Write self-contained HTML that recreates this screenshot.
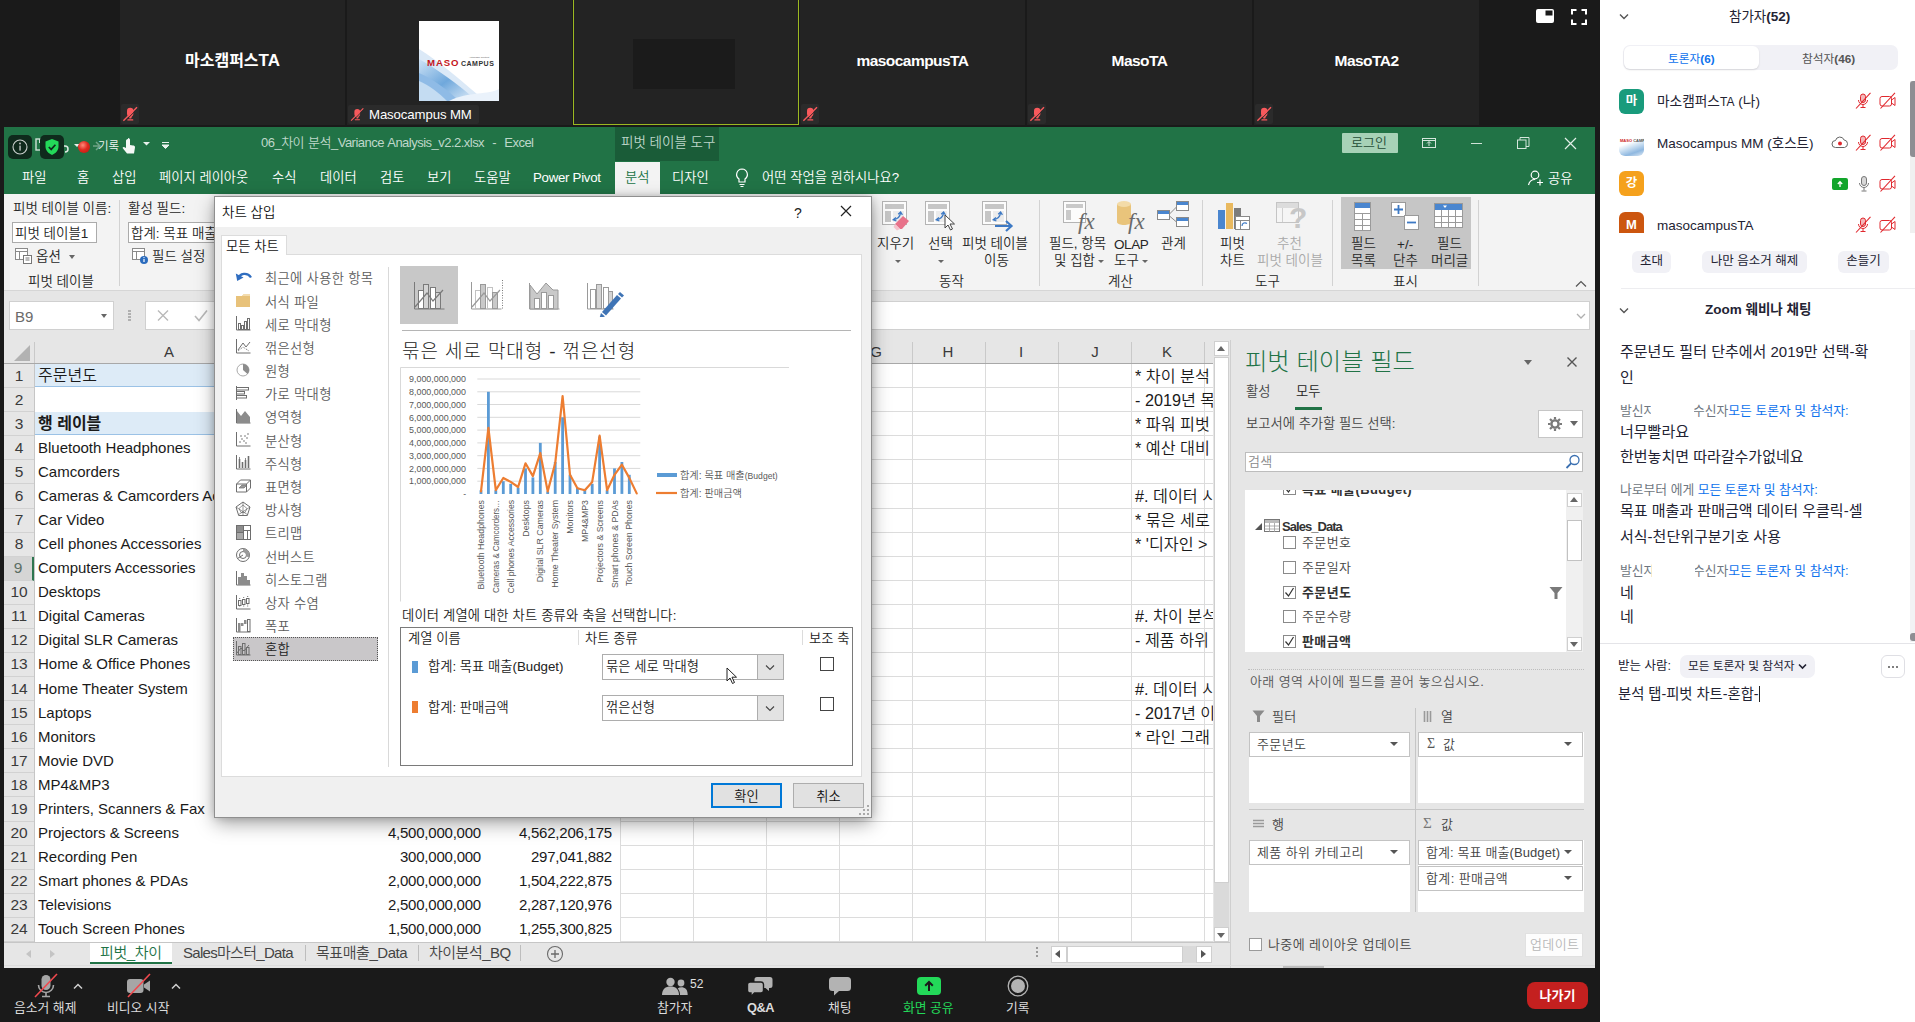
<!DOCTYPE html>
<html lang="ko">
<head>
<meta charset="utf-8">
<title>Zoom Webinar - Excel</title>
<style>
*{box-sizing:border-box;margin:0;padding:0}
html,body{width:1915px;height:1022px;overflow:hidden;background:#1a1a1a}
body{font-family:"Liberation Sans","Noto Sans CJK KR",sans-serif;font-size:13px;color:#222;position:relative}
.a{position:absolute}
.t{position:absolute;white-space:nowrap;line-height:1}
.kr{font-family:"Noto Sans CJK KR","Liberation Sans",sans-serif}
/* video strip */
.tile{position:absolute;top:0;height:125px;background:#232323}
.tile .nm{position:absolute;left:0;right:0;top:51.5px;text-align:center;color:#fff;font-weight:bold;font-size:16px;line-height:18px;white-space:nowrap}
.mut{position:absolute;left:.5px;top:104px;width:18px;height:20px;background:#2b2b2b;border-radius:2px}
/* excel */
#xl{font-weight:350;position:absolute;left:4px;top:127px;width:1591px;height:841px;background:#e6e6e6;overflow:hidden}
.g{color:#fff}
.rt{margin-top:1px;position:absolute;white-space:nowrap;line-height:1;font-size:13.5px;color:#262626}
.cell{position:absolute;white-space:nowrap;line-height:24px;font-size:15px;color:#1a1a1a;height:24px}
.rn{position:absolute;left:0;width:29px;text-align:center;font-size:15.5px;line-height:24px;color:#333;height:24px}
.num{position:absolute;text-align:right;white-space:nowrap;line-height:24px;font-size:15px;letter-spacing:-.22px;color:#1a1a1a;height:24px}
</style>
</head>
<body>
<!-- ===== TOP VIDEO STRIP ===== -->
<div id="strip" class="a" style="left:0;top:0;width:1600px;height:127px;background:#1a1a1a">
  <div class="tile" style="left:120px;width:225px"><div class="nm">마소캠퍼스<span style="font-size:17px">TA</span></div><div class="mut"><svg width="19" height="20" viewBox="0 0 19 20"><use href="#tmic"/></svg></div></div>
  <div class="tile" style="left:347px;width:225px">
    <div class="a" style="left:72px;top:21px;width:80px;height:80px;background:#fff;overflow:hidden">
      <svg width="80" height="80" viewBox="0 0 80 80"><defs><linearGradient id="lg1" x1="0" y1="0" x2="1" y2="1"><stop offset="0" stop-color="#cfe3f6"/><stop offset=".5" stop-color="#6fa8dc"/><stop offset="1" stop-color="#e8f1fa"/></linearGradient></defs>
      <path d="M0 28 C20 40 45 62 66 80 H0z" fill="#dbe9f7"/><path d="M0 38 C18 48 40 64 58 80 H0z" fill="url(#lg1)"/><path d="M0 52 C14 58 30 70 40 80 H0z" fill="#8fbbe6"/><path d="M0 60 C10 64 20 72 28 80 H0z" fill="#c4dcf2"/><path d="M30 80 C50 70 70 74 80 68 V80z" fill="#eaf2fb"/>
      <text x="8" y="45" font-family="Liberation Sans, sans-serif" font-weight="bold" font-size="9.600" fill="#c4161c" letter-spacing=".9">MASO</text>
      <text x="42" y="45" font-family="Liberation Sans, sans-serif" font-weight="bold" font-size="7" fill="#333" letter-spacing=".5">CAMPUS</text>
      <text x="50" y="37" font-family="Liberation Sans, sans-serif" font-size="2.400" fill="#555">Actionable Content</text></svg>
    </div>
    <div class="a" style="left:1px;top:105px;width:131px;height:19px;background:#2b2b2b;border-radius:2px"></div>
    <svg class="a" style="left:2px;top:105px" width="17" height="19" viewBox="0 0 19 20"><use href="#tmic"/></svg>
    <div class="t" style="left:22px;top:108px;font-size:13.200px;color:#fff;letter-spacing:-.1px">Masocampus MM</div>
  </div>
  <div class="tile" style="left:573px;width:226px;border:1px solid #9bb821;border-top:0"><div class="a" style="left:59px;top:39px;width:102px;height:50px;background:#1b1b1b"></div></div>
  <div class="tile" style="left:800px;width:225px"><div class="nm" style="font-size:15.500px;letter-spacing:-.55px">masocampusTA</div><div class="mut"><svg width="19" height="20" viewBox="0 0 19 20"><use href="#tmic"/></svg></div></div>
  <div class="tile" style="left:1027px;width:225px"><div class="nm" style="font-size:15.500px;letter-spacing:-.55px">MasoTA</div><div class="mut"><svg width="19" height="20" viewBox="0 0 19 20"><use href="#tmic"/></svg></div></div>
  <div class="tile" style="left:1254px;width:225px"><div class="nm" style="font-size:15.500px;letter-spacing:-.55px">MasoTA2</div><div class="mut"><svg width="19" height="20" viewBox="0 0 19 20"><use href="#tmic"/></svg></div></div>
  <svg class="a" style="left:1536px;top:9px" width="18" height="14" viewBox="0 0 18 14"><path d="M2 0 h14 a2 2 0 0 1 2 2 v10 a2 2 0 0 1 -2 2 h-14 a2 2 0 0 1 -2 -2 v-10 a2 2 0 0 1 2 -2z" fill="#fff"/><rect x="9.500" y="1.500" width="7" height="5" fill="#1a1a1a"/></svg>
  <svg class="a" style="left:1571px;top:9px" width="16" height="16" viewBox="0 0 16 16"><path d="M1 5.500 V1 H5.500 M10.500 1 H15 V5.500 M15 10.500 V15 H10.500 M5.500 15 H1 V10.500" fill="none" stroke="#fff" stroke-width="2"/></svg>
</div>
<svg width="0" height="0" style="position:absolute"><defs>
<g id="tmic"><rect x="6" y="3.800" width="6.400" height="8.800" rx="3.200" fill="#f8595c"/><path d="M7.600 12 h3.400 l-.8 2.600 h-1.800z" fill="#f8595c"/><rect x="6.300" y="15.200" width="6" height="1.300" rx=".5" fill="#f8595c"/><path d="M2.400 16.800 L16 3.200" stroke="#f8595c" stroke-width="1.400"/><path d="M3.400 17.800 L17 4.200" stroke="#2b2b2b" stroke-width="1"/></g>
</defs></svg>

<!-- ===== EXCEL WINDOW ===== -->
<div id="xl"><div id="xli" class="a" style="left:-4px;top:-127px;width:1915px;height:1022px">
<!--XL-GREEN-->
<div class="a" style="left:4px;top:127px;width:1591px;height:67px;background:#217346"></div>
<div class="a" style="left:615px;top:127px;width:104px;height:34px;background:#1a5c38"></div>
<div class="a" style="left:615px;top:162px;width:45px;height:32px;background:#f3f3f3"></div>
<!-- quick access (partly covered by zoom overlay) -->
<svg class="a" style="left:28px;top:136px" width="150" height="22" viewBox="0 0 150 22">
  <rect x="8" y="3" width="11" height="11" fill="none" stroke="#cfe0d6" stroke-width="1.4"/>
  <rect x="11" y="3" width="5" height="4" fill="#cfe0d6"/>
  <path d="M33 6 l-4 4 l4 4 M29 10 h8 a3 3 0 0 1 0 6" fill="none" stroke="#dfeae3" stroke-width="1.5"/>
  <path d="M46 8 h6 l-3 3 z" fill="#e8f1ec"/>
  <path d="M68 6 l4 4 l-4 4 M72 10 h-7" fill="none" stroke="#6fa487" stroke-width="1.5"/>
  <path d="M100 3 c-1.5 0 -2 1 -2 2 v7 l-2 -1 c-1 -.3 -1.800 .6 -1 1.500 l4 5 h7 l1 -6 c.2 -1.500 -1 -2 -2 -2 l-3 -.5 v-5 c0 -1 -.5 -2 -2 -2z" fill="#f4f8f6"/>
  <path d="M115 6 h7 l-3.500 3.500 z" fill="#e8f1ec"/>
  <path d="M134 9 h7 l-3.500 3.500 z M134 6.500 h7" fill="#e8f1ec" stroke="#e8f1ec" stroke-width="1"/>
</svg>
<!-- zoom overlay badges -->
<div class="a" style="left:8px;top:135px;width:24px;height:24px;border-radius:5px;background:#0f2a1c"></div>
<svg class="a" style="left:11px;top:138px" width="18" height="18" viewBox="0 0 18 18"><circle cx="9" cy="9" r="7" fill="none" stroke="#c9cfcc" stroke-width="1.1"/><rect x="8.400" y="7.600" width="1.300" height="5" fill="#c9cfcc"/><circle cx="9" cy="5.500" r=".9" fill="#c9cfcc"/></svg>
<div class="a" style="left:40px;top:135px;width:24px;height:24px;border-radius:5px;background:#0f2a1c"></div>
<svg class="a" style="left:44px;top:138px" width="16" height="18" viewBox="0 0 16 18"><path d="M8 1 L14.500 3.500 V8.500 C14.500 12.500 11.500 15.500 8 17 C4.500 15.500 1.500 12.500 1.500 8.500 V3.500 Z" fill="#23d959"/><path d="M4.800 9 l2.400 2.400 l4.200 -4.600" fill="none" stroke="#0f2a1c" stroke-width="1.700"/></svg>
<div class="a" style="left:78px;top:141px;width:12px;height:12px;border-radius:50%;background:radial-gradient(circle at 40% 35%,#ff8a7a 0,#e02a20 45%,#b4160f 100%)"></div>
<div class="t g" style="left:98px;top:141px;font-size:11.500px;color:#f2f6f4">기록</div>
<!-- title -->
<div class="t" style="left:261px;top:136px;font-size:13px;color:#bfd8ca;letter-spacing:-.52px;word-spacing:1px">06_차이 분석_Variance Analysis_v2.2.xlsx &nbsp;-&nbsp; Excel</div>
<div class="t" style="left:621px;top:136px;font-size:13.500px;color:#bdd6c8">피벗 테이블 도구</div>
<!-- window buttons -->
<div class="a" style="left:1342px;top:133px;width:56px;height:20px;background:#a7d2b7;border-radius:1px"></div>
<div class="t" style="left:1351px;top:136px;font-size:13px;color:#1f4d35">로그인</div>
<svg class="a" style="left:1421px;top:135px" width="16" height="16" viewBox="0 0 16 16"><rect x="1.500" y="3.500" width="13" height="9" fill="none" stroke="#d5e6dc" stroke-width="1"/><path d="M1.500 5.500 h13" stroke="#d5e6dc"/><path d="M8 11 v-4 M6 8.500 l2 -2 l2 2" fill="none" stroke="#d5e6dc"/></svg>
<div class="a" style="left:1471px;top:143px;width:11px;height:1px;background:#cfe2d7"></div>
<svg class="a" style="left:1517px;top:137px" width="13" height="13" viewBox="0 0 13 13"><rect x=".5" y="3" width="8.500" height="8.500" fill="none" stroke="#d5e6dc"/><path d="M3 3 v-2.500 h9 v9 h-3" fill="none" stroke="#d5e6dc"/></svg>
<svg class="a" style="left:1564px;top:137px" width="13" height="13" viewBox="0 0 13 13"><path d="M1 1 l11 11 M12 1 l-11 11" stroke="#e3efe8" stroke-width="1.200"/></svg>
<!-- tabs -->
<div class="t g" style="left:22px;top:171px;font-size:13.300px">파일</div>
<div class="t g" style="left:77px;top:171px;font-size:13.300px">홈</div>
<div class="t g" style="left:112px;top:171px;font-size:13.300px">삽입</div>
<div class="t g" style="left:159px;top:171px;font-size:13.300px">페이지 레이아웃</div>
<div class="t g" style="left:272px;top:171px;font-size:13.300px">수식</div>
<div class="t g" style="left:320px;top:171px;font-size:13.300px">데이터</div>
<div class="t g" style="left:380px;top:171px;font-size:13.300px">검토</div>
<div class="t g" style="left:427px;top:171px;font-size:13.300px">보기</div>
<div class="t g" style="left:474px;top:171px;font-size:13.300px">도움말</div>
<div class="t g" style="left:533px;top:171px;font-size:13.300px;letter-spacing:-.3px">Power Pivot</div>
<div class="t" style="left:625px;top:171px;font-size:13.300px;color:#217346">분석</div>
<div class="t g" style="left:672px;top:171px;font-size:13.300px">디자인</div>
<svg class="a" style="left:734px;top:167px" width="16" height="22" viewBox="0 0 16 22"><path d="M8 2 a5.500 5.500 0 0 0 -3 10 v3 h6 v-3 a5.500 5.500 0 0 0 -3 -10z" fill="none" stroke="#fff" stroke-width="1.200"/><path d="M5.500 17.500 h5 M6.500 19.500 h3" stroke="#fff" stroke-width="1.200"/></svg>
<div class="t g" style="left:762px;top:171px;font-size:13.300px">어떤 작업을 원하시나요?</div>
<svg class="a" style="left:1527px;top:169px" width="18" height="18" viewBox="0 0 18 18"><circle cx="8" cy="6" r="3.800" fill="none" stroke="#fff" stroke-width="1.200"/><path d="M1.500 16 c1 -4 3.500 -5.500 6.500 -5.500" fill="none" stroke="#fff" stroke-width="1.200"/><path d="M13 10.500 v6 M10 13.500 h6" stroke="#fff" stroke-width="1.200"/></svg>
<div class="t g" style="left:1548px;top:172px;font-size:13.300px">공유</div>
<!--XL-RIBBON-->
<div class="a" style="left:4px;top:194px;width:1591px;height:97px;background:#f3f3f3;border-bottom:1px solid #d6d6d6"></div>
<div class="rt" style="left:13px;top:201px">피벗 테이블 이름:</div>
<div class="a" style="left:12px;top:222px;width:85px;height:21px;background:#fff;border:1px solid #ababab"></div>
<div class="rt" style="left:15px;top:226px">피벗 테이블1</div>
<svg class="a" style="left:14px;top:247px" width="19" height="18" viewBox="0 0 19 18"><rect x="1.500" y="1.500" width="12" height="11" fill="#fff" stroke="#8a8a8a"/><path d="M1.500 4.500 h12 M5.500 4.500 v8" stroke="#8a8a8a"/><rect x="9.500" y="8.500" width="8" height="8" fill="#fff" stroke="#777"/><path d="M11.500 11 h4 M11.500 13 h4" stroke="#777"/></svg>
<div class="rt" style="left:36px;top:249px">옵션</div>
<div class="a" style="left:69px;top:255px;border:3px solid transparent;border-top:4px solid #666;border-bottom:0"></div>
<div class="rt" style="left:28px;top:274px">피벗 테이블</div>
<div class="a" style="left:119px;top:200px;width:1px;height:86px;background:#d2d2d2"></div>
<div class="rt" style="left:128px;top:201px">활성 필드:</div>
<div class="a" style="left:128px;top:222px;width:140px;height:21px;background:#fff;border:1px solid #ababab"></div>
<div class="rt" style="left:131px;top:226px">합계: 목표 매출</div>
<svg class="a" style="left:131px;top:247px" width="19" height="18" viewBox="0 0 19 18"><rect x="1.500" y="1.500" width="12" height="11" fill="#fff" stroke="#8a8a8a"/><path d="M1.500 4.500 h12 M5.500 4.500 v8" stroke="#8a8a8a"/><circle cx="13" cy="13" r="4" fill="#2a6bbd"/><rect x="12.400" y="12" width="1.200" height="3" fill="#fff"/><circle cx="13" cy="10.600" r=".7" fill="#fff"/></svg>
<div class="rt" style="left:152px;top:249px">필드 설정</div>
<!-- 동작 -->
<svg class="a" style="left:881px;top:200px" width="34" height="32" viewBox="0 0 34 32"><rect x="1.500" y="1.500" width="24" height="23" fill="#fcfcfc" stroke="#b4b4b4"/><rect x="4" y="4" width="19" height="5" fill="#c6c6c6"/><rect x="4" y="11" width="6" height="11" fill="#c6c6c6"/><rect x="12" y="11" width="11" height="11" fill="#ececec"/><path d="M13 19.500 c3.500 -.5 6 -3 6.500 -6.500" fill="none" stroke="#3d79c4" stroke-width="1.400"/><path d="M17.200 14.200 l2.400 -2.200 l1.800 2.800 M15 17.500 l-2.800 2.200 l3.200 1.300" fill="none" stroke="#3d79c4" stroke-width="1.300"/><path d="M19 29 l-5 -5 l8 -8 l6 5 l-7 8z" fill="#e8728a"/><path d="M14 24 l5 5 l-3 1.500 l-3.500 -3.500z" fill="#f6c1cb"/></svg>
<div class="rt" style="left:877px;top:236px">지우기</div>
<div class="a" style="left:895px;top:260px;border:3px solid transparent;border-top:3px solid #666;border-bottom:0"></div>
<svg class="a" style="left:924px;top:200px" width="34" height="32" viewBox="0 0 34 32"><rect x="1.500" y="1.500" width="24" height="23" fill="#fcfcfc" stroke="#b4b4b4"/><rect x="4" y="4" width="19" height="5" fill="#c6c6c6"/><rect x="4" y="11" width="6" height="11" fill="#c6c6c6"/><rect x="12" y="11" width="11" height="11" fill="#ececec"/><path d="M13 19.500 c3.500 -.5 6 -3 6.500 -6.500" fill="none" stroke="#3d79c4" stroke-width="1.400"/><path d="M17.200 14.200 l2.400 -2.200 l1.800 2.800 M15 17.500 l-2.800 2.200 l3.200 1.300" fill="none" stroke="#3d79c4" stroke-width="1.300"/><path d="M21 15 v13 l3 -3 l2.500 5 l2 -1 l-2.500 -5 h4.500z" fill="#fff" stroke="#444" stroke-width="1"/></svg>
<div class="rt" style="left:928px;top:236px">선택</div>
<div class="a" style="left:938px;top:260px;border:3px solid transparent;border-top:3px solid #666;border-bottom:0"></div>
<svg class="a" style="left:981px;top:200px" width="36" height="32" viewBox="0 0 36 32"><rect x="1.500" y="1.500" width="24" height="23" fill="#fcfcfc" stroke="#b4b4b4"/><rect x="4" y="4" width="19" height="5" fill="#c6c6c6"/><rect x="4" y="11" width="6" height="11" fill="#c6c6c6"/><rect x="12" y="11" width="11" height="11" fill="#ececec"/><path d="M13 19.500 c3.500 -.5 6 -3 6.500 -6.500" fill="none" stroke="#3d79c4" stroke-width="1.400"/><path d="M17.200 14.200 l2.400 -2.200 l1.800 2.800 M15 17.500 l-2.800 2.200 l3.200 1.300" fill="none" stroke="#3d79c4" stroke-width="1.300"/><path d="M14 26 h16 M25 21 l5.500 5 l-5.500 5" fill="none" stroke="#3d79c4" stroke-width="2.200"/></svg>
<div class="rt" style="left:962px;top:236px">피벗 테이블</div>
<div class="rt" style="left:984px;top:253px">이동</div>
<div class="rt" style="left:939px;top:274px">동작</div>
<div class="a" style="left:1039px;top:200px;width:1px;height:86px;background:#d2d2d2"></div>
<!-- 계산 -->
<svg class="a" style="left:1062px;top:200px" width="38" height="32" viewBox="0 0 38 32"><rect x="1.500" y="1.500" width="22" height="21" fill="#fcfcfc" stroke="#b4b4b4"/><rect x="4" y="4" width="17" height="4" fill="#c9c9c9"/><rect x="4" y="10" width="5" height="10" fill="#c9c9c9"/></svg>
<div class="t" style="left:1078px;top:210px;font-family:'Liberation Serif',serif;font-style:italic;font-size:23px;color:#6a6a6a">fx</div>
<div class="rt" style="left:1049px;top:236px">필드, 항목</div>
<div class="rt" style="left:1054px;top:253px">및 집합</div>
<div class="a" style="left:1098px;top:260px;border:3px solid transparent;border-top:3px solid #666;border-bottom:0"></div>
<svg class="a" style="left:1115px;top:199px" width="24" height="32" viewBox="0 0 24 32"><path d="M2 5 v18 c0 4 14 4 14 0 v-18z" fill="#e9c47b"/><ellipse cx="9" cy="5" rx="7" ry="3" fill="#f3dba8"/></svg>
<div class="t" style="left:1128px;top:210px;font-family:'Liberation Serif',serif;font-style:italic;font-size:23px;color:#6a6a6a">fx</div>
<div class="rt" style="left:1114px;top:237px;letter-spacing:-.4px">OLAP</div>
<div class="rt" style="left:1114px;top:253px">도구</div>
<div class="a" style="left:1142px;top:260px;border:3px solid transparent;border-top:3px solid #666;border-bottom:0"></div>
<svg class="a" style="left:1156px;top:200px" width="34" height="30" viewBox="0 0 34 30"><rect x="1.500" y="10.500" width="12" height="9" fill="#fff" stroke="#8a8a8a"/><rect x="2" y="11" width="11" height="3" fill="#4a86cf"/><rect x="20.500" y="1.500" width="12" height="9" fill="#fff" stroke="#8a8a8a"/><rect x="21" y="2" width="11" height="3" fill="#4a86cf"/><rect x="20.500" y="17.500" width="12" height="9" fill="#fff" stroke="#8a8a8a"/><rect x="21" y="18" width="11" height="3" fill="#4a86cf"/><path d="M13.500 14 l7 -7 M13.500 16 l7 6" stroke="#8a8a8a"/></svg>
<div class="rt" style="left:1161px;top:236px">관계</div>
<div class="rt" style="left:1108px;top:274px">계산</div>
<div class="a" style="left:1202px;top:200px;width:1px;height:86px;background:#d2d2d2"></div>
<!-- 도구 -->
<svg class="a" style="left:1216px;top:200px" width="36" height="32" viewBox="0 0 36 32"><rect x="2" y="10" width="7" height="19" fill="#4a86cf"/><rect x="10" y="3" width="7" height="26" fill="#e9b95f"/><rect x="18" y="8" width="7" height="21" fill="#7c7c7c"/><rect x="19.500" y="16.500" width="14" height="13" fill="#fff" stroke="#8a8a8a"/><path d="M19.500 20.500 h14 M24.500 20.500 v9" stroke="#8a8a8a"/><path d="M26 26 c0 -3 3 -4 5 -2.500" fill="none" stroke="#3d79c4" stroke-width="1.200"/></svg>
<div class="rt" style="left:1220px;top:236px">피벗</div>
<div class="rt" style="left:1220px;top:253px">차트</div>
<svg class="a" style="left:1275px;top:200px" width="34" height="32" viewBox="0 0 34 32"><rect x="1.500" y="2.500" width="22" height="20" fill="#f5f5f5" stroke="#c4c4c4"/><rect x="2" y="3" width="21" height="5" fill="#dcdcdc"/><path d="M7.500 8 v14" stroke="#d0d0d0"/></svg>
<div class="t" style="left:1289px;top:203px;font-size:30px;font-weight:bold;color:#c7c7c7">?</div>
<div class="rt" style="left:1277px;top:236px;color:#a9a9a9">추천</div>
<div class="rt" style="left:1257px;top:253px;color:#a9a9a9">피벗 테이블</div>
<div class="rt" style="left:1255px;top:274px">도구</div>
<div class="a" style="left:1332px;top:200px;width:1px;height:86px;background:#d2d2d2"></div>
<!-- 표시 -->
<div class="a" style="left:1341px;top:197px;width:130px;height:72px;background:#c6c6c6"></div>
<svg class="a" style="left:1353px;top:201px" width="20" height="32" viewBox="0 0 20 32"><rect x="1.500" y="1.500" width="16" height="28" fill="#fff" stroke="#9a9a9a"/><rect x="2" y="2" width="15" height="5" fill="#4a86cf"/><path d="M1.500 12.500 h16 M1.500 18.500 h16 M1.500 24.500 h16 M9.500 12.500 v17" stroke="#9a9a9a"/></svg>
<div class="rt" style="left:1351px;top:236px">필드</div>
<div class="rt" style="left:1351px;top:253px">목록</div>
<svg class="a" style="left:1390px;top:201px" width="32" height="32" viewBox="0 0 32 32"><rect x="1.500" y="1.500" width="14" height="14" fill="#fff" stroke="#9a9a9a"/><path d="M8.500 4 v9 M4 8.500 h9" stroke="#3d79c4" stroke-width="1.800"/><rect x="14.500" y="14.500" width="14" height="14" fill="#fff" stroke="#9a9a9a"/><path d="M17 21.500 h9" stroke="#3d79c4" stroke-width="1.800"/></svg>
<div class="rt" style="left:1397px;top:237px">+/-</div>
<div class="rt" style="left:1393px;top:253px">단추</div>
<svg class="a" style="left:1433px;top:201px" width="32" height="30" viewBox="0 0 32 30"><rect x="1.500" y="2.500" width="28" height="24" fill="#fff" stroke="#9a9a9a"/><rect x="2" y="3" width="27" height="6" fill="#4a86cf"/><path d="M1.500 15.500 h28 M1.500 21.500 h28 M8.500 9 v17.500 M15.500 9 v17.500 M22.500 9 v17.500" stroke="#9a9a9a"/><path d="M10 4.500 h4 l-2 2.500z" fill="#fff"/></svg>
<div class="rt" style="left:1437px;top:236px">필드</div>
<div class="rt" style="left:1431px;top:253px">머리글</div>
<div class="rt" style="left:1393px;top:274px">표시</div>
<div class="a" style="left:1478px;top:200px;width:1px;height:86px;background:#d2d2d2"></div>
<svg class="a" style="left:1575px;top:280px" width="12" height="8" viewBox="0 0 12 8"><path d="M1 6.500 l5 -5 l5 5" fill="none" stroke="#555" stroke-width="1.200"/></svg>
<!--XL-FBAR-->
<div class="a" style="left:4px;top:292px;width:1591px;height:48px;background:#e6e6e6"></div>
<div class="a" style="left:9px;top:301px;width:105px;height:29px;background:#fff;border:1px solid #d0d0d0"></div>
<div class="t" style="left:15px;top:309px;font-size:15px;color:#6a6a6a">B9</div>
<div class="a" style="left:101px;top:314px;border:3.500px solid transparent;border-top:4px solid #666;border-bottom:0"></div>
<div class="a" style="left:128px;top:310px;width:3px;height:2px;background:#b0b0b0;box-shadow:0 3px 0 #b0b0b0,0 6px 0 #b0b0b0,0 9px 0 #b0b0b0"></div>
<div class="a" style="left:145px;top:301px;width:1445px;height:29px;background:#fff;border:1px solid #d0d0d0"></div>
<svg class="a" style="left:156px;top:309px" width="60" height="14" viewBox="0 0 60 14"><path d="M2 1.500 l10 10 M12 1.500 l-10 10" stroke="#b9b9b9" stroke-width="1.400" fill="none"/><path d="M39 7 l4 4.500 l8 -10" stroke="#b9b9b9" stroke-width="1.600" fill="none"/></svg>
<svg class="a" style="left:1576px;top:313px" width="10" height="7" viewBox="0 0 10 7"><path d="M1 1 l4 4 l4 -4" fill="none" stroke="#b0b0b0" stroke-width="1.300"/></svg>
<!--XL-GRID-->
<div class="a" style="left:4px;top:340px;width:1209px;height:24px;background:#e6e6e6;border-bottom:1px solid #a8a8a8"></div>
<div class="a" style="left:14px;top:345px;width:0;height:0;border-left:16px solid transparent;border-bottom:16px solid #b2b2b2"></div>
<div class="a" style="left:4px;top:364px;width:1209px;height:578px;background:#fff"></div>
<div class="t" style="left:159px;top:344px;width:20px;text-align:center;font-size:15px;color:#3a3a3a">A</div>
<div class="t" style="left:866px;top:344px;width:20px;text-align:center;font-size:15px;color:#3a3a3a">G</div>
<div class="t" style="left:938px;top:344px;width:20px;text-align:center;font-size:15px;color:#3a3a3a">H</div>
<div class="t" style="left:1011px;top:344px;width:20px;text-align:center;font-size:15px;color:#3a3a3a">I</div>
<div class="t" style="left:1085px;top:344px;width:20px;text-align:center;font-size:15px;color:#3a3a3a">J</div>
<div class="t" style="left:1157px;top:344px;width:20px;text-align:center;font-size:15px;color:#3a3a3a">K</div>
<div class="a" style="left:34px;top:342px;width:1px;height:21px;background:#c9c9c9"></div>
<div class="a" style="left:620px;top:342px;width:1px;height:21px;background:#c9c9c9"></div>
<div class="a" style="left:693px;top:342px;width:1px;height:21px;background:#c9c9c9"></div>
<div class="a" style="left:766px;top:342px;width:1px;height:21px;background:#c9c9c9"></div>
<div class="a" style="left:839px;top:342px;width:1px;height:21px;background:#c9c9c9"></div>
<div class="a" style="left:912px;top:342px;width:1px;height:21px;background:#c9c9c9"></div>
<div class="a" style="left:985px;top:342px;width:1px;height:21px;background:#c9c9c9"></div>
<div class="a" style="left:1058px;top:342px;width:1px;height:21px;background:#c9c9c9"></div>
<div class="a" style="left:1131px;top:342px;width:1px;height:21px;background:#c9c9c9"></div>
<div class="a" style="left:1204px;top:342px;width:1px;height:21px;background:#c9c9c9"></div>
<div class="a" style="left:620px;top:364px;width:1px;height:578px;background:#dcdcdc"></div>
<div class="a" style="left:693px;top:364px;width:1px;height:578px;background:#dcdcdc"></div>
<div class="a" style="left:766px;top:364px;width:1px;height:578px;background:#dcdcdc"></div>
<div class="a" style="left:839px;top:364px;width:1px;height:578px;background:#dcdcdc"></div>
<div class="a" style="left:912px;top:364px;width:1px;height:578px;background:#dcdcdc"></div>
<div class="a" style="left:985px;top:364px;width:1px;height:578px;background:#dcdcdc"></div>
<div class="a" style="left:1058px;top:364px;width:1px;height:578px;background:#dcdcdc"></div>
<div class="a" style="left:1131px;top:364px;width:1px;height:578px;background:#dcdcdc"></div>
<div class="a" style="left:1204px;top:364px;width:1px;height:578px;background:#dcdcdc"></div>
<div class="a" style="left:620px;top:387px;width:593px;height:1px;background:#dcdcdc"></div>
<div class="a" style="left:620px;top:411px;width:593px;height:1px;background:#dcdcdc"></div>
<div class="a" style="left:620px;top:435px;width:593px;height:1px;background:#dcdcdc"></div>
<div class="a" style="left:620px;top:459px;width:593px;height:1px;background:#dcdcdc"></div>
<div class="a" style="left:620px;top:483px;width:593px;height:1px;background:#dcdcdc"></div>
<div class="a" style="left:620px;top:508px;width:593px;height:1px;background:#dcdcdc"></div>
<div class="a" style="left:620px;top:532px;width:593px;height:1px;background:#dcdcdc"></div>
<div class="a" style="left:620px;top:556px;width:593px;height:1px;background:#dcdcdc"></div>
<div class="a" style="left:620px;top:580px;width:593px;height:1px;background:#dcdcdc"></div>
<div class="a" style="left:620px;top:604px;width:593px;height:1px;background:#dcdcdc"></div>
<div class="a" style="left:620px;top:628px;width:593px;height:1px;background:#dcdcdc"></div>
<div class="a" style="left:620px;top:652px;width:593px;height:1px;background:#dcdcdc"></div>
<div class="a" style="left:620px;top:676px;width:593px;height:1px;background:#dcdcdc"></div>
<div class="a" style="left:620px;top:700px;width:593px;height:1px;background:#dcdcdc"></div>
<div class="a" style="left:620px;top:724px;width:593px;height:1px;background:#dcdcdc"></div>
<div class="a" style="left:620px;top:748px;width:593px;height:1px;background:#dcdcdc"></div>
<div class="a" style="left:620px;top:772px;width:593px;height:1px;background:#dcdcdc"></div>
<div class="a" style="left:620px;top:796px;width:593px;height:1px;background:#dcdcdc"></div>
<div class="a" style="left:620px;top:821px;width:593px;height:1px;background:#dcdcdc"></div>
<div class="a" style="left:620px;top:845px;width:593px;height:1px;background:#dcdcdc"></div>
<div class="a" style="left:620px;top:869px;width:593px;height:1px;background:#dcdcdc"></div>
<div class="a" style="left:620px;top:893px;width:593px;height:1px;background:#dcdcdc"></div>
<div class="a" style="left:620px;top:917px;width:593px;height:1px;background:#dcdcdc"></div>
<div class="a" style="left:620px;top:941px;width:593px;height:1px;background:#dcdcdc"></div>
<div class="a" style="left:4px;top:364px;width:31px;height:578px;background:#e6e6e6;border-right:1px solid #c6c6c6"></div>
<div class="rn" style="left:4px;top:364px;height:24px;line-height:23.4px;border-bottom:1px solid #d2d2d2;width:30px;color:#3a3a3a">1</div>
<div class="rn" style="left:4px;top:388px;height:24px;line-height:23.5px;border-bottom:1px solid #d2d2d2;width:30px;color:#3a3a3a">2</div>
<div class="rn" style="left:4px;top:412px;height:24px;line-height:23.6px;border-bottom:1px solid #d2d2d2;width:30px;color:#3a3a3a">3</div>
<div class="rn" style="left:4px;top:436px;height:24px;line-height:23.8px;border-bottom:1px solid #d2d2d2;width:30px;color:#3a3a3a">4</div>
<div class="rn" style="left:4px;top:460px;height:24px;line-height:23.9px;border-bottom:1px solid #d2d2d2;width:30px;color:#3a3a3a">5</div>
<div class="rn" style="left:4px;top:484px;height:25px;line-height:24.0px;border-bottom:1px solid #d2d2d2;width:30px;color:#3a3a3a">6</div>
<div class="rn" style="left:4px;top:509px;height:24px;line-height:22.1px;border-bottom:1px solid #d2d2d2;width:30px;color:#3a3a3a">7</div>
<div class="rn" style="left:4px;top:533px;height:24px;line-height:22.2px;border-bottom:1px solid #d2d2d2;width:30px;color:#3a3a3a">8</div>
<div class="rn" style="left:4px;top:557px;height:24px;line-height:22.4px;background:#d5d5d5;border-right:2px solid #2e7650;border-bottom:1px solid #d2d2d2;width:30px;color:#5c6e64">9</div>
<div class="rn" style="left:4px;top:581px;height:24px;line-height:22.5px;border-bottom:1px solid #d2d2d2;width:30px;color:#3a3a3a">10</div>
<div class="rn" style="left:4px;top:605px;height:24px;line-height:22.6px;border-bottom:1px solid #d2d2d2;width:30px;color:#3a3a3a">11</div>
<div class="rn" style="left:4px;top:629px;height:24px;line-height:22.7px;border-bottom:1px solid #d2d2d2;width:30px;color:#3a3a3a">12</div>
<div class="rn" style="left:4px;top:653px;height:24px;line-height:22.8px;border-bottom:1px solid #d2d2d2;width:30px;color:#3a3a3a">13</div>
<div class="rn" style="left:4px;top:677px;height:24px;line-height:23.0px;border-bottom:1px solid #d2d2d2;width:30px;color:#3a3a3a">14</div>
<div class="rn" style="left:4px;top:701px;height:24px;line-height:23.1px;border-bottom:1px solid #d2d2d2;width:30px;color:#3a3a3a">15</div>
<div class="rn" style="left:4px;top:725px;height:24px;line-height:23.2px;border-bottom:1px solid #d2d2d2;width:30px;color:#3a3a3a">16</div>
<div class="rn" style="left:4px;top:749px;height:24px;line-height:23.3px;border-bottom:1px solid #d2d2d2;width:30px;color:#3a3a3a">17</div>
<div class="rn" style="left:4px;top:773px;height:24px;line-height:23.4px;border-bottom:1px solid #d2d2d2;width:30px;color:#3a3a3a">18</div>
<div class="rn" style="left:4px;top:797px;height:25px;line-height:23.6px;border-bottom:1px solid #d2d2d2;width:30px;color:#3a3a3a">19</div>
<div class="rn" style="left:4px;top:822px;height:24px;line-height:21.7px;border-bottom:1px solid #d2d2d2;width:30px;color:#3a3a3a">20</div>
<div class="rn" style="left:4px;top:846px;height:24px;line-height:21.8px;border-bottom:1px solid #d2d2d2;width:30px;color:#3a3a3a">21</div>
<div class="rn" style="left:4px;top:870px;height:24px;line-height:21.9px;border-bottom:1px solid #d2d2d2;width:30px;color:#3a3a3a">22</div>
<div class="rn" style="left:4px;top:894px;height:24px;line-height:22.0px;border-bottom:1px solid #d2d2d2;width:30px;color:#3a3a3a">23</div>
<div class="rn" style="left:4px;top:918px;height:24px;line-height:22.2px;border-bottom:1px solid #d2d2d2;width:30px;color:#3a3a3a">24</div>
<div class="a" style="left:35px;top:364px;width:586px;height:23px;background:#ddebf7;border-bottom:1px solid #9bc2e6"></div>
<div class="a" style="left:35px;top:412px;width:586px;height:23px;background:#ddebf7;border-bottom:1px solid #9bc2e6"></div>
<div class="cell" style="left:38px;top:363.7px;font-size:16px;">주문년도</div>
<div class="cell" style="left:38px;top:411.8px;font-weight:bold;font-size:16px;">행 레이블</div>
<div class="cell" style="left:38px;top:435.9px;">Bluetooth Headphones</div>
<div class="cell" style="left:38px;top:459.9px;">Camcorders</div>
<div class="cell" style="left:38px;top:484.0px;">Cameras &amp; Camcorders Accessories</div>
<div class="cell" style="left:38px;top:508.1px;">Car Video</div>
<div class="cell" style="left:38px;top:532.1px;">Cell phones Accessories</div>
<div class="cell" style="left:38px;top:556.2px;">Computers Accessories</div>
<div class="cell" style="left:38px;top:580.2px;">Desktops</div>
<div class="cell" style="left:38px;top:604.3px;">Digital Cameras</div>
<div class="cell" style="left:38px;top:628.4px;">Digital SLR Cameras</div>
<div class="cell" style="left:38px;top:652.4px;">Home &amp; Office Phones</div>
<div class="cell" style="left:38px;top:676.5px;">Home Theater System</div>
<div class="cell" style="left:38px;top:700.5px;">Laptops</div>
<div class="cell" style="left:38px;top:724.6px;">Monitors</div>
<div class="cell" style="left:38px;top:748.7px;">Movie DVD</div>
<div class="cell" style="left:38px;top:772.7px;">MP4&amp;MP3</div>
<div class="cell" style="left:38px;top:796.8px;">Printers, Scanners &amp; Fax</div>
<div class="cell" style="left:38px;top:820.8px;">Projectors &amp; Screens</div>
<div class="cell" style="left:38px;top:844.9px;">Recording Pen</div>
<div class="cell" style="left:38px;top:869.0px;">Smart phones &amp; PDAs</div>
<div class="cell" style="left:38px;top:893.0px;">Televisions</div>
<div class="cell" style="left:38px;top:917.1px;">Touch Screen Phones</div>
<div class="num" style="left:340px;width:141px;top:820.8px">4,500,000,000</div>
<div class="num" style="left:471px;width:141px;top:820.8px">4,562,206,175</div>
<div class="num" style="left:340px;width:141px;top:844.9px">300,000,000</div>
<div class="num" style="left:471px;width:141px;top:844.9px">297,041,882</div>
<div class="num" style="left:340px;width:141px;top:869.0px">2,000,000,000</div>
<div class="num" style="left:471px;width:141px;top:869.0px">1,504,222,875</div>
<div class="num" style="left:340px;width:141px;top:893.0px">2,500,000,000</div>
<div class="num" style="left:471px;width:141px;top:893.0px">2,287,120,976</div>
<div class="num" style="left:340px;width:141px;top:917.1px">1,500,000,000</div>
<div class="num" style="left:471px;width:141px;top:917.1px">1,255,300,825</div>
<div class="cell" style="left:1135px;top:363.7px;font-size:16.200px">* 차이 분석</div>
<div class="cell" style="left:1135px;top:387.8px;font-size:16.200px">- 2019년 목</div>
<div class="cell" style="left:1135px;top:411.8px;font-size:16.200px">* 파워 피벗</div>
<div class="cell" style="left:1135px;top:435.9px;font-size:16.200px">* 예산 대비</div>
<div class="cell" style="left:1135px;top:484.0px;font-size:16.200px">#. 데이터 시</div>
<div class="cell" style="left:1135px;top:508.1px;font-size:16.200px">* 묶은 세로</div>
<div class="cell" style="left:1135px;top:532.1px;font-size:16.200px">* '디자인 &gt;</div>
<div class="cell" style="left:1135px;top:604.3px;font-size:16.200px">#. 차이 분석</div>
<div class="cell" style="left:1135px;top:628.4px;font-size:16.200px">- 제품 하위</div>
<div class="cell" style="left:1135px;top:676.5px;font-size:16.200px">#. 데이터 시</div>
<div class="cell" style="left:1135px;top:700.5px;font-size:16.200px">- 2017년 이</div>
<div class="cell" style="left:1135px;top:724.6px;font-size:16.200px">* 라인 그래</div>
<div class="a" style="left:1213px;top:340px;width:17px;height:602px;background:#e6e6e6"></div>
<div class="a" style="left:1214px;top:341px;width:15px;height:15px;background:#fff;border:1px solid #cfcfcf"></div>
<div class="a" style="left:1217px;top:346px;border:4px solid transparent;border-bottom:5px solid #666;border-top:0"></div>
<div class="a" style="left:1214px;top:357px;width:15px;height:526px;background:#fff;border:1px solid #cfcfcf"></div>
<div class="a" style="left:1214px;top:883px;width:15px;height:44px;background:#dadada"></div>
<div class="a" style="left:1214px;top:927px;width:15px;height:15px;background:#fff;border:1px solid #cfcfcf"></div>
<div class="a" style="left:1217px;top:933px;border:4px solid transparent;border-top:5px solid #666;border-bottom:0"></div>
<div class="a" style="left:1230px;top:340px;width:1px;height:628px;background:#cfcfcf"></div>
<!--XL-PANE-->
<div class="a" style="left:1231px;top:340px;width:360px;height:628px;background:#e6e6e6"></div>
<div class="t" style="left:1245px;top:350px;font-size:24.300px;font-weight:300;color:#217346">피벗 테이블 필드</div>
<div class="a" style="left:1524px;top:360px;border:4.500px solid transparent;border-top:5px solid #666;border-bottom:0"></div>
<svg class="a" style="left:1566px;top:356px" width="12" height="12" viewBox="0 0 12 12"><path d="M1.500 1.500 l9 9 M10.500 1.500 l-9 9" stroke="#555" stroke-width="1.400"/></svg>
<div class="t" style="left:1246px;top:385px;font-size:13.300px;color:#444">활성</div>
<div class="t" style="left:1296px;top:385px;font-size:13.300px;color:#222">모두</div>
<div class="a" style="left:1295px;top:407px;width:27px;height:3px;background:#217346"></div>
<div class="t" style="left:1246px;top:417px;font-size:13.300px;color:#444">보고서에 추가할 필드 선택:</div>
<div class="a" style="left:1538px;top:410px;width:45px;height:28px;background:#fff;border:1px solid #c6c6c6"></div>
<svg class="a" style="left:1547px;top:416px" width="16" height="16" viewBox="0 0 16 16"><circle cx="8" cy="8" r="3.600" fill="none" stroke="#7a7a7a" stroke-width="2.400"/><g stroke="#7a7a7a" stroke-width="2.200"><path d="M8 1 v2.500 M8 12.500 v2.500 M1 8 h2.500 M12.500 8 h2.500 M3 3 l1.800 1.800 M11.200 11.200 l1.800 1.800 M13 3 l-1.800 1.800 M4.800 11.200 l-1.800 1.800"/></g></svg>
<div class="a" style="left:1570px;top:421px;border:4px solid transparent;border-top:5px solid #666;border-bottom:0"></div>
<div class="a" style="left:1245px;top:452px;width:338px;height:20px;background:#fff;border:1px solid #bdbdbd"></div>
<div class="t" style="left:1248px;top:455px;font-size:13px;letter-spacing:.4px;color:#8a8a8a">검색</div>
<svg class="a" style="left:1565px;top:454px" width="16" height="16" viewBox="0 0 16 16"><circle cx="9.500" cy="6" r="4.500" fill="none" stroke="#3a6fb0" stroke-width="1.300"/><path d="M6.300 9.200 L1.500 14" stroke="#3a6fb0" stroke-width="1.800"/></svg>
<!-- field list -->
<div class="a" style="left:1245px;top:490px;width:338px;height:162px;background:#fff;overflow:hidden">
  <div class="a" style="left:38px;top:-8px;width:13px;height:13px;border:1px solid #8a8a8a;background:#fff"></div><svg class="a" style="left:39px;top:-7px" width="11" height="11" viewBox="0 0 11 11"><path d="M1.500 5.500 l3 3.500 l5 -8" fill="none" stroke="#333" stroke-width="1.200"/></svg>
  <div class="t" style="left:57px;top:-7px;font-size:13px;letter-spacing:.4px;font-weight:bold;color:#333">목표 매출(Budget)</div>
  <div class="a" style="left:10px;top:33px;width:0;height:0;border-left:7px solid transparent;border-bottom:7px solid #555"></div>
  <svg class="a" style="left:19px;top:29px" width="16" height="14" viewBox="0 0 16 14"><rect x=".5" y=".5" width="15" height="12" fill="#fff" stroke="#777"/><rect x="1" y="1" width="14" height="3" fill="#bbb"/><path d="M.5 7 h15 M.5 10 h15 M5.500 4 v9 M10.500 4 v9" stroke="#999" stroke-width=".8"/></svg>
  <div class="t" style="left:37px;top:30px;font-size:13px;font-weight:bold;color:#333;letter-spacing:-.95px">Sales_Data</div>
  <div class="a" style="left:38px;top:46px;width:13px;height:13px;border:1px solid #8a8a8a;background:#fff"></div>
  <div class="t" style="left:57px;top:46px;font-size:13px;letter-spacing:.4px;color:#444">주문번호</div>
  <div class="a" style="left:38px;top:71px;width:13px;height:13px;border:1px solid #8a8a8a;background:#fff"></div>
  <div class="t" style="left:57px;top:71px;font-size:13px;letter-spacing:.4px;color:#444">주문일자</div>
  <div class="a" style="left:38px;top:96px;width:13px;height:13px;border:1px solid #8a8a8a;background:#fff"></div>
  <svg class="a" style="left:39px;top:97px" width="11" height="11" viewBox="0 0 11 11"><path d="M1.500 5.500 l3 3.500 l5 -8" fill="none" stroke="#333" stroke-width="1.200"/></svg>
  <div class="t" style="left:57px;top:96px;font-size:13px;letter-spacing:.4px;font-weight:bold;color:#333">주문년도</div>
  <svg class="a" style="left:304px;top:96px" width="14" height="14" viewBox="0 0 14 14"><path d="M.5 1 h13 l-5 6 v6 h-3 v-6z" fill="#7a7a7a"/></svg>
  <div class="a" style="left:38px;top:120px;width:13px;height:13px;border:1px solid #8a8a8a;background:#fff"></div>
  <div class="t" style="left:57px;top:120px;font-size:13px;letter-spacing:.4px;color:#444">주문수량</div>
  <div class="a" style="left:38px;top:145px;width:13px;height:13px;border:1px solid #8a8a8a;background:#fff"></div>
  <svg class="a" style="left:39px;top:146px" width="11" height="11" viewBox="0 0 11 11"><path d="M1.500 5.500 l3 3.500 l5 -8" fill="none" stroke="#333" stroke-width="1.200"/></svg>
  <div class="t" style="left:57px;top:145px;font-size:13px;letter-spacing:.4px;font-weight:bold;color:#333">판매금액</div>
  <!-- scrollbar -->
  <div class="a" style="left:321px;top:0;width:17px;height:162px;background:#f0f0f0"></div>
  <div class="a" style="left:322px;top:3px;width:15px;height:14px;background:#fff;border:1px solid #cfcfcf"></div>
  <div class="a" style="left:325px;top:7px;border:4px solid transparent;border-bottom:5px solid #666;border-top:0"></div>
  <div class="a" style="left:322px;top:30px;width:15px;height:41px;background:#fff;border:1px solid #c2c2c2"></div>
  <div class="a" style="left:322px;top:147px;width:15px;height:14px;background:#fff;border:1px solid #cfcfcf"></div>
  <div class="a" style="left:325px;top:152px;border:4px solid transparent;border-top:5px solid #666;border-bottom:0"></div>
</div>
<div class="a" style="left:1248px;top:669px;width:336px;height:0;border-top:1px dotted #bdbdbd"></div>
<div class="t" style="left:1250px;top:675px;font-size:13px;letter-spacing:.4px;color:#555">아래 영역 사이에 필드를 끌어 놓으십시오.</div>
<!-- areas -->
<svg class="a" style="left:1252px;top:710px" width="13" height="13" viewBox="0 0 13 13"><path d="M.5 .5 h12 l-4.500 5.500 v6 h-3 v-6z" fill="#8a8a8a"/></svg>
<div class="t" style="left:1272px;top:710px;font-size:13px;letter-spacing:.4px;color:#444">필터</div>
<div class="a" style="left:1249px;top:732px;width:161px;height:71px;background:#fff"></div>
<div class="a" style="left:1249px;top:732px;width:161px;height:25px;background:#fff;border:1px solid #c3c3c3"></div>
<div class="t" style="left:1257px;top:738px;font-size:13px;letter-spacing:.4px;color:#444">주문년도</div>
<div class="a" style="left:1390px;top:742px;border:4px solid transparent;border-top:4.500px solid #555;border-bottom:0"></div>
<div class="a" style="left:1415px;top:708px;width:1px;height:204px;background:#c6c6c6"></div>
<div class="a" style="left:1249px;top:809px;width:335px;height:1px;background:#c6c6c6"></div>
<svg class="a" style="left:1423px;top:711px" width="10" height="11" viewBox="0 0 10 11"><path d="M1.500 0 v11 M4.500 0 v11 M7.500 0 v11" stroke="#9a9a9a" stroke-width="1.600"/></svg>
<div class="t" style="left:1441px;top:710px;font-size:13px;letter-spacing:.4px;color:#444">열</div>
<div class="a" style="left:1418px;top:732px;width:166px;height:71px;background:#fff"></div>
<div class="a" style="left:1418px;top:732px;width:165px;height:25px;background:#fff;border:1px solid #c3c3c3"></div>
<div class="t" style="left:1427px;top:737px;font-size:14px;color:#555;font-family:'Liberation Serif','Noto Sans CJK KR',serif">Σ</div>
<div class="t" style="left:1443px;top:738px;font-size:13px;letter-spacing:.4px;color:#444">값</div>
<div class="a" style="left:1564px;top:742px;border:4px solid transparent;border-top:4.500px solid #555;border-bottom:0"></div>
<svg class="a" style="left:1253px;top:819px" width="12" height="10" viewBox="0 0 12 10"><path d="M0 1.500 h11 M0 4.500 h11 M0 7.500 h11" stroke="#9a9a9a" stroke-width="1.400"/></svg>
<div class="t" style="left:1272px;top:818px;font-size:13px;letter-spacing:.4px;color:#444">행</div>
<div class="a" style="left:1249px;top:840px;width:161px;height:72px;background:#fff"></div>
<div class="a" style="left:1249px;top:840px;width:161px;height:25px;background:#fff;border:1px solid #c3c3c3"></div>
<div class="t" style="left:1257px;top:846px;font-size:13px;letter-spacing:.4px;color:#444">제품 하위 카테고리</div>
<div class="a" style="left:1390px;top:850px;border:4px solid transparent;border-top:4.500px solid #555;border-bottom:0"></div>
<div class="t" style="left:1423px;top:816px;font-size:15px;color:#777;font-family:'Liberation Serif','Noto Sans CJK KR',serif">Σ</div>
<div class="t" style="left:1441px;top:818px;font-size:13px;letter-spacing:.4px;color:#444">값</div>
<div class="a" style="left:1418px;top:840px;width:166px;height:72px;background:#fff"></div>
<div class="a" style="left:1418px;top:840px;width:165px;height:25px;background:#fff;border:1px solid #c3c3c3"></div>
<div class="t" style="left:1426px;top:846px;font-size:13px;color:#444;letter-spacing:.1px">합계: 목표 매출(Budget)</div>
<div class="a" style="left:1564px;top:850px;border:4px solid transparent;border-top:4.500px solid #555;border-bottom:0"></div>
<div class="a" style="left:1418px;top:866px;width:165px;height:25px;background:#fff;border:1px solid #c3c3c3"></div>
<div class="t" style="left:1426px;top:872px;font-size:13px;letter-spacing:.4px;color:#444">합계: 판매금액</div>
<div class="a" style="left:1564px;top:876px;border:4px solid transparent;border-top:4.500px solid #555;border-bottom:0"></div>
<div class="a" style="left:1249px;top:938px;width:13px;height:13px;background:#fff;border:1px solid #9a9a9a"></div>
<div class="t" style="left:1268px;top:938px;font-size:13px;letter-spacing:.4px;color:#444">나중에 레이아웃 업데이트</div>
<div class="a" style="left:1525px;top:933px;width:58px;height:24px;background:#fdfdfd;border:1px solid #e1e1e1"></div>
<div class="t" style="left:1530px;top:938px;font-size:13px;letter-spacing:.4px;color:#b8b8b8">업데이트</div>
<div class="a" style="left:1283px;top:966px;width:41px;height:2px;background:#bdbdbd"></div>
<!--XL-TABS-->
<div class="a" style="left:4px;top:942px;width:1226px;height:26px;background:#e6e6e6;border-top:1px solid #c6c6c6"></div>
<div class="a" style="left:4px;top:965px;width:1591px;height:1px;background:#dcdcdc"></div>
<div class="a" style="left:26px;top:950px;border:4px solid transparent;border-right:5px solid #c4c4c4;border-left:0"></div>
<div class="a" style="left:50px;top:950px;border:4px solid transparent;border-left:5px solid #c4c4c4;border-right:0"></div>
<div class="a" style="left:90px;top:943px;width:82px;height:21px;background:#fff;border-bottom:2px solid #217346"></div>
<div class="t" style="left:100px;top:944.6px;font-size:15px;color:#217346;letter-spacing:-.4px">피벗_차이</div>
<div class="t" style="left:183px;top:944.6px;font-size:15px;color:#444;letter-spacing:-.7px">Sales마스터_Data</div>
<div class="a" style="left:305px;top:945px;width:1px;height:16px;background:#bdbdbd"></div>
<div class="t" style="left:316px;top:944.6px;font-size:15px;color:#444;letter-spacing:-.45px">목표매출_Data</div>
<div class="a" style="left:418px;top:945px;width:1px;height:16px;background:#bdbdbd"></div>
<div class="t" style="left:429px;top:944.6px;font-size:15px;color:#444;letter-spacing:-.5px">차이분석_BQ</div>
<div class="a" style="left:520px;top:945px;width:1px;height:16px;background:#bdbdbd"></div>
<svg class="a" style="left:546px;top:945px" width="18" height="18" viewBox="0 0 18 18"><circle cx="9" cy="9" r="7.500" fill="none" stroke="#6a6a6a" stroke-width="1.100"/><path d="M9 5 v8 M5 9 h8" stroke="#6a6a6a" stroke-width="1.300"/></svg>
<div class="a" style="left:1036px;top:947px;width:2px;height:2px;background:#9a9a9a;box-shadow:0 4px 0 #9a9a9a,0 8px 0 #9a9a9a"></div>
<div class="a" style="left:1051px;top:946px;width:16px;height:17px;background:#fff;border:1px solid #cfcfcf"></div>
<div class="a" style="left:1055px;top:950px;border:4px solid transparent;border-right:5px solid #555;border-left:0"></div>
<div class="a" style="left:1067px;top:946px;width:116px;height:17px;background:#fff;border:1px solid #cfcfcf"></div>
<div class="a" style="left:1183px;top:946px;width:13px;height:17px;background:#dadada"></div>
<div class="a" style="left:1196px;top:946px;width:16px;height:17px;background:#fff;border:1px solid #cfcfcf"></div>
<div class="a" style="left:1201px;top:950px;border:4px solid transparent;border-left:5px solid #555;border-right:0"></div>
</div></div>

<!-- ===== ZOOM BOTTOM BAR ===== -->
<div id="zbar" class="a" style="left:0;top:968px;width:1600px;height:54px;background:#1a1a1a">
<div class="a" style="left:0;top:-968px;width:1915px;height:1022px">
<svg class="a" style="left:33px;top:972px" width="26" height="28" viewBox="0 0 26 28"><rect x="8.500" y="3" width="9" height="15" rx="4.500" fill="#a6a6a6"/><path d="M5.500 13 a7.500 7.500 0 0 0 15 0" fill="none" stroke="#a6a6a6" stroke-width="1.600"/><path d="M13 20.500 v3.500 M9 24.500 h8" stroke="#a6a6a6" stroke-width="1.600"/><path d="M2 25 L24 2" stroke="#f0494e" stroke-width="1.600"/></svg>
<svg class="a" style="left:73px;top:983px" width="10" height="7" viewBox="0 0 10 7"><path d="M1 5.500 l4 -4 l4 4" fill="none" stroke="#d0d0d0" stroke-width="1.500"/></svg>
<div class="t" style="left:14px;top:1002px;font-size:12.800px;color:#dcdcdc">음소거 해제</div>
<svg class="a" style="left:125px;top:972px" width="28" height="28" viewBox="0 0 28 28"><rect x="2" y="7" width="16.500" height="14" rx="3" fill="#a6a6a6"/><path d="M19 12.500 l6 -4 v11 l-6 -4z" fill="#a6a6a6"/><path d="M3 25 L25 2" stroke="#f0494e" stroke-width="1.600"/></svg>
<svg class="a" style="left:171px;top:983px" width="10" height="7" viewBox="0 0 10 7"><path d="M1 5.500 l4 -4 l4 4" fill="none" stroke="#d0d0d0" stroke-width="1.500"/></svg>
<div class="t" style="left:107px;top:1002px;font-size:12.800px;color:#dcdcdc">비디오 시작</div>
<!-- participants -->
<svg class="a" style="left:662px;top:977px" width="26" height="19" viewBox="0 0 26 19"><circle cx="8.500" cy="5" r="4.200" fill="#b3b3b3"/><path d="M0 18 c0 -6 3.500 -8.500 8.500 -8.500 s8.500 2.500 8.500 8.500z" fill="#b3b3b3"/><circle cx="19" cy="6" r="3.400" fill="#b3b3b3"/><path d="M18 18 c0 -3 -.8 -5 -2.300 -6.500 c1 -.8 2.200 -1.200 3.500 -1.200 c4 0 6.500 2.200 6.500 7.700z" fill="#b3b3b3"/></svg>
<div class="t" style="left:690px;top:978px;font-size:12px;color:#e0e0e0">52</div>
<div class="t" style="left:657px;top:1002px;font-size:12.800px;color:#dcdcdc">참가자</div>
<svg class="a" style="left:747px;top:976px" width="26" height="21" viewBox="0 0 26 21"><path d="M10 1 h13 a2.500 2.500 0 0 1 2.500 2.500 v6 a2.500 2.500 0 0 1 -2.500 2.500 h-1 v3 l-3.500 -3 h-8.500 a2.500 2.500 0 0 1 -2.500 -2.500 v-6 a2.500 2.500 0 0 1 2.500 -2.500z" fill="#b3b3b3"/><path d="M3 6 h11 a2.500 2.500 0 0 1 2.500 2.500 v6 a2.500 2.500 0 0 1 -2.500 2.500 h-6.500 l-3.500 3.500 v-3.500 h-1 a2.500 2.500 0 0 1 -2.500 -2.500 v-6 a2.500 2.500 0 0 1 2.500 -2.500z" fill="#b3b3b3" stroke="#1a1a1a" stroke-width="1.400"/></svg>
<div class="t" style="left:747px;top:1002px;font-size:12.800px;color:#dcdcdc;font-weight:bold;letter-spacing:-.5px">Q&amp;A</div>
<svg class="a" style="left:829px;top:977px" width="22" height="19" viewBox="0 0 22 19"><path d="M3.500 0 h15 a3.500 3.500 0 0 1 3.500 3.500 v7 a3.500 3.500 0 0 1 -3.500 3.500 h-8.500 l-5 4.500 v-4.500 h-1.500 a3.500 3.500 0 0 1 -3.500 -3.500 v-7 a3.500 3.500 0 0 1 3.500 -3.500z" fill="#b3b3b3"/></svg>
<div class="t" style="left:828px;top:1002px;font-size:12.800px;color:#dcdcdc">채팅</div>
<div class="a" style="left:917px;top:977px;width:24px;height:18px;border-radius:4px;background:#23d959"></div>
<svg class="a" style="left:923px;top:980px" width="12" height="12" viewBox="0 0 12 12"><path d="M6 11 v-8.500 M2.200 5.800 l3.800 -3.800 l3.800 3.800" fill="none" stroke="#1a1a1a" stroke-width="2"/></svg>
<div class="t" style="left:903px;top:1002px;font-size:12.800px;color:#23d959">화면 공유</div>
<svg class="a" style="left:1007px;top:975px" width="22" height="22" viewBox="0 0 22 22"><circle cx="11" cy="11" r="9.800" fill="none" stroke="#b3b3b3" stroke-width="1.300"/><circle cx="11" cy="11" r="7" fill="#b3b3b3"/></svg>
<div class="t" style="left:1006px;top:1002px;font-size:12.800px;color:#dcdcdc">기록</div>
<div class="a" style="left:1527px;top:982px;width:61px;height:27px;border-radius:8px;background:#c4201f"></div>
<div class="t" style="left:1527px;top:989px;width:61px;text-align:center;font-size:13px;font-weight:bold;color:#fff">나가기</div>
</div></div>

<!-- ===== RIGHT PANEL ===== -->
<div id="rp" class="a" style="left:1600px;top:0;width:315px;height:1022px;background:#fff;font-family:'Liberation Sans','Noto Sans CJK KR',sans-serif">
<div class="a" style="left:-1600px;top:0;width:1915px;height:1022px">
<svg class="a" style="left:1619px;top:13px" width="10" height="8" viewBox="0 0 10 8"><path d="M1 1.500 l4 4 l4 -4" fill="none" stroke="#555" stroke-width="1.400"/></svg>
<div class="t" style="left:1729px;top:10px;font-size:13.500px;color:#232333">참가자<b>(52)</b></div>
<div class="a" style="left:1623px;top:45px;width:275px;height:25px;background:#f1f1f6;border-radius:7px"></div>
<div class="a" style="left:1624px;top:46px;width:135px;height:23px;background:#fff;border-radius:6px;box-shadow:0 1px 2px rgba(0,0,0,.12)"></div>
<div class="t" style="left:1668px;top:53px;font-size:11.700px;color:#0e72ed">토론자<b>(6)</b></div>
<div class="t" style="left:1802px;top:53px;font-size:11.700px;color:#555">참석자<b>(46)</b></div>
<!-- participants -->
<div class="a" style="left:1619px;top:89px;width:25px;height:25px;border-radius:6px;background:#199b7c"></div>
<div class="t" style="left:1619px;top:95px;width:25px;text-align:center;font-size:12.500px;font-weight:bold;color:#fff">마</div>
<div class="t" style="left:1657px;top:95px;font-size:13.700px;color:#232333">마소캠퍼스<span style="font-size:12px">TA</span> (나)</div>
<div class="a" style="left:1619px;top:131px;width:25px;height:25px;border-radius:6px;background:linear-gradient(160deg,#fff 0,#fff 45%,#cfe2f3 60%,#8fb8e0 80%,#dfeaf5 100%);overflow:hidden"><div class="t" style="left:1px;top:8px;font-size:4px;font-weight:bold;color:#c22">MASO <span style="color:#555">CAMPUS</span></div></div>
<div class="t" style="left:1657px;top:137px;font-size:13.500px;color:#232333">Masocampus MM (호스트)</div>
<div class="a" style="left:1619px;top:171px;width:25px;height:25px;border-radius:6px;background:#f5a11c"></div>
<div class="t" style="left:1619px;top:177px;width:25px;text-align:center;font-size:12.500px;font-weight:bold;color:#fff">강</div>
<div class="a" style="left:1619px;top:212px;width:25px;height:21px;border-radius:6px 6px 0 0;background:#cc560f"></div>
<div class="t" style="left:1619px;top:218px;width:25px;text-align:center;font-size:13px;font-weight:bold;color:#fff">M</div>
<div class="t" style="left:1657px;top:219px;font-size:13.500px;color:#232333">masocampusTA</div>
<!-- status icons -->
<svg class="a" style="left:1855px;top:92px" width="44" height="18" viewBox="0 0 44 18"><use href="#micoff"/><use href="#camoff" x="24"/></svg>
<svg class="a" style="left:1855px;top:134px" width="44" height="18" viewBox="0 0 44 18"><use href="#micoff"/><use href="#camoff" x="24"/></svg>
<svg class="a" style="left:1831px;top:136px" width="18" height="13" viewBox="0 0 18 13"><path d="M4.500 11.500 a3.500 3.500 0 0 1 0 -7 a4.500 4.500 0 0 1 8.600 -.5 a3.800 3.800 0 0 1 .4 7.500z" fill="#fff" stroke="#666" stroke-width="1"/><circle cx="9" cy="7.500" r="2" fill="#e0282e"/></svg>
<div class="a" style="left:1832px;top:178px;width:16px;height:12px;border-radius:2px;background:#12a52b"></div>
<svg class="a" style="left:1836px;top:180px" width="8" height="8" viewBox="0 0 8 8"><path d="M4 7 v-5 M1.800 4 l2.200 -2.300 l2.200 2.300" fill="none" stroke="#fff" stroke-width="1.300"/></svg>
<svg class="a" style="left:1857px;top:175px" width="14" height="18" viewBox="0 0 14 18"><rect x="4.500" y="1.500" width="5" height="9" rx="2.500" fill="#d8d8d8" stroke="#777" stroke-width="1"/><path d="M2.500 8 a4.500 4.500 0 0 0 9 0 M7 12.500 v3 M4.500 16 h5" fill="none" stroke="#777" stroke-width="1"/></svg>
<svg class="a" style="left:1879px;top:175px" width="20" height="18" viewBox="0 0 20 18"><use href="#camoff"/></svg>
<svg class="a" style="left:1855px;top:216px" width="44" height="18" viewBox="0 0 44 18"><use href="#micoff"/><use href="#camoff" x="24"/></svg>
<!-- scrollbar -->
<div class="a" style="left:1910px;top:81px;width:5px;height:152px;background:#f0f0f0"></div>
<div class="a" style="left:1910px;top:81px;width:6px;height:76px;background:#8e8e93;border-radius:3px 0 0 3px"></div>
<!-- buttons -->
<div class="a" style="left:1632px;top:251px;width:39px;height:22px;background:#f1f1f6;border-radius:6px"></div>
<div class="t" style="left:1632px;top:255px;width:39px;text-align:center;font-size:12.500px;color:#232333">초대</div>
<div class="a" style="left:1702px;top:251px;width:105px;height:22px;background:#f1f1f6;border-radius:6px"></div>
<div class="t" style="left:1702px;top:255px;width:105px;text-align:center;font-size:12.500px;color:#232333">나만 음소거 해제</div>
<div class="a" style="left:1838px;top:251px;width:51px;height:22px;background:#f1f1f6;border-radius:6px"></div>
<div class="t" style="left:1838px;top:255px;width:51px;text-align:center;font-size:12.500px;color:#232333">손들기</div>
<div class="a" style="left:1621px;top:288px;width:294px;height:1px;background:#ededf0"></div>
<svg class="a" style="left:1619px;top:307px" width="10" height="8" viewBox="0 0 10 8"><path d="M1 1.500 l4 4 l4 -4" fill="none" stroke="#555" stroke-width="1.400"/></svg>
<div class="t" style="left:1705px;top:303px;font-size:13.500px;font-weight:bold;color:#232333">Zoom 웨비나 채팅</div>
<!-- chat -->
<div class="t" style="left:1620px;top:343.5px;font-size:15px;color:#232333">주문년도 필터 단추에서 2019만 선택-확</div>
<div class="t" style="left:1620px;top:369.5px;font-size:15px;color:#232333">인</div>
<div class="t" style="left:1620px;top:404.5px;font-size:12.800px;color:#6e7680">발신자</div>
<div class="a" style="left:1651px;top:400px;width:44px;height:18px;background:#fff"></div>
<div class="t" style="left:1693px;top:404.5px;font-size:12.800px;color:#6e7680">수신자<span style="color:#0e72ed">모든 토론자 및 참석자:</span></div>
<div class="a" style="left:1654px;top:400px;width:40px;height:18px;background:#fff"></div>
<div class="t" style="left:1620px;top:424px;font-size:15px;color:#232333">너무빨라요</div>
<div class="t" style="left:1620px;top:449px;font-size:15px;color:#232333">한번놓치면 따라갈수가없네요</div>
<div class="t" style="left:1620px;top:483.5px;font-size:12.800px;color:#6e7680">나로부터 에게 <span style="color:#0e72ed">모든 토론자 및 참석자:</span></div>
<div class="t" style="left:1620px;top:503px;font-size:15px;color:#232333">목표 매출과 판매금액 데이터 우클릭-셀</div>
<div class="t" style="left:1620px;top:529px;font-size:15px;color:#232333">서식-천단위구분기호 사용</div>
<div class="t" style="left:1620px;top:564.5px;font-size:12.800px;color:#6e7680">발신자</div>
<div class="t" style="left:1693px;top:564.5px;font-size:12.800px;color:#6e7680">수신자<span style="color:#0e72ed">모든 토론자 및 참석자:</span></div>
<div class="a" style="left:1652px;top:560px;width:43px;height:18px;background:#fff"></div>
<div class="t" style="left:1620px;top:585px;font-size:15px;color:#232333">네</div>
<div class="t" style="left:1620px;top:609px;font-size:15px;color:#232333">네</div>
<div class="a" style="left:1910px;top:330px;width:5px;height:312px;background:#f2f2f4"></div>
<div class="a" style="left:1910px;top:633px;width:6px;height:8px;background:#8e8e93;border-radius:3px 0 0 3px"></div>
<div class="a" style="left:1600px;top:643px;width:315px;height:1px;background:#e4e4e8"></div>
<div class="t" style="left:1618px;top:660px;font-size:12.500px;color:#232333">받는 사람:</div>
<div class="a" style="left:1680px;top:655px;width:135px;height:23px;background:#f1f1f6;border-radius:7px"></div>
<div class="t" style="left:1688px;top:660px;font-size:11.700px;color:#232333">모든 토론자 및 참석자</div>
<svg class="a" style="left:1798px;top:663px" width="9" height="7" viewBox="0 0 9 7"><path d="M1 1.500 l3.500 3.500 l3.500 -3.500" fill="none" stroke="#232333" stroke-width="1.600"/></svg>
<div class="a" style="left:1881px;top:655px;width:24px;height:23px;background:#fff;border:1px solid #dfdfe4;border-radius:6px"></div>
<div class="a" style="left:1888px;top:666px;width:2px;height:2px;border-radius:50%;background:#555;box-shadow:4px 0 0 #555,8px 0 0 #555"></div>
<div class="t" style="left:1618px;top:687px;font-size:14.300px;color:#232333">분석 탭-피벗 차트-혼합-</div>
<div class="a" style="left:1759px;top:686px;width:1px;height:16px;background:#222"></div>
</div></div>
<svg width="0" height="0" style="position:absolute"><defs>
<g id="micoff"><rect x="5.500" y="2" width="5" height="8.500" rx="2.500" fill="#f3b8ba" stroke="#e0282e" stroke-width="1"/><path d="M3.500 8 a4.500 4.500 0 0 0 9 0 M8 12.500 v2.500 M5.500 15.500 h5" fill="none" stroke="#e0282e" stroke-width="1"/><path d="M1 16.500 L15.500 .8" stroke="#e0282e" stroke-width="1.100"/></g>
<g id="camoff"><rect x="1" y="4.500" width="11.500" height="9.500" rx="2" fill="none" stroke="#e0282e" stroke-width="1"/><path d="M12.500 8 l3.500 -2.500 v8 l-3.500 -2.500" fill="none" stroke="#e0282e" stroke-width="1"/><path d="M1.500 16.500 L16 .8" stroke="#e0282e" stroke-width="1.100"/></g>
</defs></svg>

<!-- ===== DIALOG ===== -->
<div id="dlgwrap" style="font-weight:350">
<div id="dlg" class="a" style="left:215px;top:197px;width:656px;height:620px;background:#f0f0f0;box-shadow:0 0 0 1px #8f8f8f,0 6px 18px rgba(0,0,0,.38),0 0 8px rgba(0,0,0,.2)"></div>
<div class="a" style="left:215px;top:197px;width:656px;height:30px;background:#fff"></div>
<div class="t" style="left:222px;top:206px;font-size:13.500px;color:#111">차트 삽입</div>
<div class="t" style="left:794px;top:206px;font-size:14px;color:#222">?</div>
<svg class="a" style="left:840px;top:205px" width="12" height="12" viewBox="0 0 12 12"><path d="M1 1 l10 10 M11 1 l-10 10" stroke="#222" stroke-width="1.200"/></svg>
<div class="a" style="left:221px;top:254px;width:641px;height:523px;background:#fff;border:1px solid #dcdcdc"></div>
<div class="a" style="left:221px;top:235px;width:66px;height:20px;background:#fff;border:1px solid #dcdcdc;border-bottom:0"></div>
<div class="t" style="left:226px;top:240px;font-size:13.300px;color:#111">모든 차트</div>
<div class="a" style="left:388px;top:267px;width:1px;height:500px;background:#d9d9d9"></div>
<svg class="a" style="left:235px;top:268.8px" width="17" height="17" viewBox="0 0 17 17"><path d="M3.500 10 c1 -6 9 -7 12.500 -1.500" fill="none" stroke="#2f6dc0" stroke-width="2.300"/><path d="M.8 4.500 l1.400 7.500 l6.300 -3.500z" fill="#2f6dc0"/></svg>
<div class="t" style="left:265px;top:272.3px;font-size:13.300px;color:#5c5c5c;letter-spacing:.3px">최근에 사용한 항목</div>
<svg class="a" style="left:235px;top:292.0px" width="17" height="17" viewBox="0 0 17 17"><path d="M1 4 h6 l2 -2 h6 v13 h-14z" fill="#e8c27a"/><path d="M9 2 h6 v2 h-8z" fill="#f3dcae"/></svg>
<div class="t" style="left:265px;top:295.5px;font-size:13.300px;color:#5c5c5c;letter-spacing:.3px">서식 파일</div>
<svg class="a" style="left:235px;top:315.2px" width="17" height="17" viewBox="0 0 17 17"><path d="M1.500 1 v14 h14" fill="none" stroke="#6e6e6e"/><rect x="3.500" y="8.500" width="2" height="6" fill="none" stroke="#6e6e6e"/><rect x="6.500" y="10.500" width="2" height="4" fill="none" stroke="#6e6e6e"/><rect x="9.500" y="6.500" width="2" height="8" fill="none" stroke="#6e6e6e"/><rect x="12.500" y="3.500" width="2" height="11" fill="none" stroke="#6e6e6e"/></svg>
<div class="t" style="left:265px;top:318.7px;font-size:13.300px;color:#5c5c5c;letter-spacing:.3px">세로 막대형</div>
<svg class="a" style="left:235px;top:338.4px" width="17" height="17" viewBox="0 0 17 17"><path d="M1.500 1 v14 h14" fill="none" stroke="#6e6e6e"/><path d="M3 12 l5 -7 l3 4 l4 -5" fill="none" stroke="#6e6e6e"/><path d="M3 13 l5 -4 l6 4" fill="none" stroke="#6e6e6e" stroke-dasharray="1 1"/></svg>
<div class="t" style="left:265px;top:341.9px;font-size:13.300px;color:#5c5c5c;letter-spacing:.3px">꺾은선형</div>
<svg class="a" style="left:235px;top:361.6px" width="17" height="17" viewBox="0 0 17 17"><circle cx="8" cy="8" r="6" fill="#fff" stroke="#aaa"/><path d="M8 8 v-6 a6 6 0 0 1 4.500 10z" fill="#8c8c8c"/></svg>
<div class="t" style="left:265px;top:365.1px;font-size:13.300px;color:#5c5c5c;letter-spacing:.3px">원형</div>
<svg class="a" style="left:235px;top:384.8px" width="17" height="17" viewBox="0 0 17 17"><path d="M1.500 1 v14" stroke="#6e6e6e"/><rect x="1.500" y="2.500" width="12" height="2.500" fill="none" stroke="#6e6e6e"/><rect x="1.500" y="6.500" width="8" height="2.500" fill="none" stroke="#6e6e6e"/><rect x="1.500" y="10.500" width="10" height="2.500" fill="none" stroke="#6e6e6e"/></svg>
<div class="t" style="left:265px;top:388.2px;font-size:13.300px;color:#5c5c5c;letter-spacing:.3px">가로 막대형</div>
<svg class="a" style="left:235px;top:407.9px" width="17" height="17" viewBox="0 0 17 17"><path d="M1.500 1 v14 h14" fill="none" stroke="#6e6e6e"/><path d="M2 3 l4 5 l4 -5 l5 6 v6 h-13z" fill="#8c8c8c"/></svg>
<div class="t" style="left:265px;top:411.4px;font-size:13.300px;color:#5c5c5c;letter-spacing:.3px">영역형</div>
<svg class="a" style="left:235px;top:431.1px" width="17" height="17" viewBox="0 0 17 17"><path d="M1.500 1 v14 h14" fill="none" stroke="#6e6e6e"/><g fill="#6e6e6e"><circle cx="5" cy="11" r=".8"/><circle cx="7" cy="8" r=".8"/><circle cx="9" cy="10" r=".8"/><circle cx="10" cy="5" r=".8"/><circle cx="12" cy="7" r=".8"/><circle cx="13" cy="3" r=".8"/><circle cx="6" cy="5" r=".8"/><circle cx="11" cy="12" r=".8"/></g></svg>
<div class="t" style="left:265px;top:434.6px;font-size:13.300px;color:#5c5c5c;letter-spacing:.3px">분산형</div>
<svg class="a" style="left:235px;top:454.3px" width="17" height="17" viewBox="0 0 17 17"><path d="M1.500 1 v14 h14" fill="none" stroke="#6e6e6e"/><path d="M4.500 5 v9 M7.500 8 v6 M10.500 6 v8 M13.500 2 v12" stroke="#6e6e6e" stroke-width="1.600"/><path d="M4.500 3 v2 M10.500 4 v2" stroke="#6e6e6e" stroke-width=".8"/></svg>
<div class="t" style="left:265px;top:457.8px;font-size:13.300px;color:#5c5c5c;letter-spacing:.3px">주식형</div>
<svg class="a" style="left:235px;top:477.5px" width="17" height="17" viewBox="0 0 17 17"><path d="M1.500 6 l4 -4 h10 v8 l-4 4 h-10z M1.500 6 h10 l4 -4 M11.500 6 v8" fill="none" stroke="#6e6e6e"/><path d="M4 10 l3 -3 h5 l-3 3z" fill="#9a9a9a" stroke="#6e6e6e" stroke-width=".7"/></svg>
<div class="t" style="left:265px;top:481px;font-size:13.300px;color:#5c5c5c;letter-spacing:.3px">표면형</div>
<svg class="a" style="left:235px;top:500.7px" width="17" height="17" viewBox="0 0 17 17"><path d="M8 1 l7 5 l-2.700 8.500 h-8.600 l-2.700 -8.500z" fill="none" stroke="#6e6e6e"/><path d="M8 4 l4 3.500 l-2 4 h-4 l-2 -4z M8 1 v13 M1 6 l12 8 M15 6 l-12 8" fill="none" stroke="#6e6e6e" stroke-width=".7"/></svg>
<div class="t" style="left:265px;top:504.2px;font-size:13.300px;color:#5c5c5c;letter-spacing:.3px">방사형</div>
<svg class="a" style="left:235px;top:523.9px" width="17" height="17" viewBox="0 0 17 17"><rect x="1.500" y="1.500" width="14" height="14" fill="none" stroke="#6e6e6e"/><rect x="2" y="2" width="6" height="6" fill="#8c8c8c"/><rect x="2" y="8.500" width="6" height="6.500" fill="#a8a8a8"/><path d="M8.500 1.500 v14 M8.500 6.500 h7 M12.500 6.500 v9 M1.500 8.500 h7" stroke="#6e6e6e"/></svg>
<div class="t" style="left:265px;top:527.4px;font-size:13.300px;color:#5c5c5c;letter-spacing:.3px">트리맵</div>
<svg class="a" style="left:235px;top:547.1px" width="17" height="17" viewBox="0 0 17 17"><circle cx="8" cy="8" r="6.500" fill="none" stroke="#6e6e6e"/><circle cx="8" cy="8" r="3.500" fill="none" stroke="#6e6e6e"/><path d="M8 1.500 a6.500 6.500 0 0 1 6 9 l-3 -1.300 a3.500 3.500 0 0 0 -3 -4.700z" fill="#9a9a9a"/><path d="M8 8 l-5.500 3.500" stroke="#6e6e6e"/></svg>
<div class="t" style="left:265px;top:550.6px;font-size:13.300px;color:#5c5c5c;letter-spacing:.3px">선버스트</div>
<svg class="a" style="left:235px;top:570.3px" width="17" height="17" viewBox="0 0 17 17"><path d="M1.500 1 v14 h14" fill="none" stroke="#6e6e6e"/><rect x="3" y="7" width="3" height="8" fill="#8c8c8c"/><rect x="6" y="3" width="3" height="12" fill="#8c8c8c"/><rect x="9" y="6" width="3" height="9" fill="#8c8c8c"/><rect x="12" y="10" width="3" height="5" fill="#8c8c8c"/></svg>
<div class="t" style="left:265px;top:573.8px;font-size:13.300px;color:#5c5c5c;letter-spacing:.3px">히스토그램</div>
<svg class="a" style="left:235px;top:593.5px" width="17" height="17" viewBox="0 0 17 17"><path d="M1.500 1 v14 h14" fill="none" stroke="#6e6e6e"/><rect x="3.500" y="6.500" width="2.500" height="5" fill="none" stroke="#6e6e6e"/><rect x="7.500" y="5.500" width="2.500" height="5" fill="none" stroke="#6e6e6e"/><rect x="11.500" y="4.500" width="2.500" height="5" fill="none" stroke="#6e6e6e"/><path d="M4.700 4 v2.500 M4.700 11.500 v2 M8.700 3 v2.500 M8.700 10.500 v2.500 M12.700 2 v2.500 M12.700 9.500 v3" stroke="#6e6e6e" stroke-dasharray="1 1"/></svg>
<div class="t" style="left:265px;top:597px;font-size:13.300px;color:#5c5c5c;letter-spacing:.3px">상자 수염</div>
<svg class="a" style="left:235px;top:616.7px" width="17" height="17" viewBox="0 0 17 17"><path d="M1.500 1 v14 h14" fill="none" stroke="#6e6e6e"/><rect x="3" y="6" width="2.500" height="9" fill="#8c8c8c"/><rect x="6" y="6" width="2.500" height="3" fill="#8c8c8c"/><rect x="9" y="3" width="2.500" height="4" fill="#8c8c8c"/><rect x="12.500" y="2.500" width="2.500" height="12" fill="none" stroke="#6e6e6e"/></svg>
<div class="t" style="left:265px;top:620.2px;font-size:13.300px;color:#5c5c5c;letter-spacing:.3px">폭포</div>
<div class="a" style="left:233px;top:637px;width:145px;height:24px;background:#c9c7c9;border:1px dotted #555"></div>
<svg class="a" style="left:235px;top:639.8px" width="17" height="17" viewBox="0 0 17 17"><path d="M1.500 1 v14 h14" fill="none" stroke="#6e6e6e"/><rect x="3.500" y="6.500" width="2.500" height="8" fill="none" stroke="#6e6e6e"/><rect x="7.500" y="3.500" width="2.500" height="11" fill="none" stroke="#6e6e6e"/><rect x="11.500" y="7.500" width="2.500" height="7" fill="none" stroke="#6e6e6e"/><path d="M2 13 l4 -5 l3 3 l5 -6" fill="none" stroke="#6e6e6e"/></svg>
<div class="t" style="left:265px;top:643.3px;font-size:13.300px;color:#222;letter-spacing:.3px">혼합</div>
<div class="a" style="left:400px;top:266px;width:58px;height:58px;background:#c8c8c8"></div>
<svg class="a" style="left:413px;top:281px" width="32" height="30" viewBox="0 0 32 30"><path d="M1.500 1 v27 h30" fill="none" stroke="#7a7a7a"/><rect x="5.500" y="9.500" width="5" height="18" fill="#fff" stroke="#7a7a7a"/><rect x="10.500" y="3.500" width="5" height="24" fill="#d4d4d4" stroke="#7a7a7a"/><rect x="17.500" y="6.500" width="5" height="21" fill="#fff" stroke="#7a7a7a"/><rect x="22.500" y="11.500" width="5" height="16" fill="#d4d4d4" stroke="#7a7a7a"/><path d="M2 26 l12 -14 l6 8 l10 -11" fill="none" stroke="#7a7a7a" stroke-width="1.200"/></svg>
<svg class="a" style="left:470px;top:279px" width="34" height="32" viewBox="0 0 34 32"><path d="M1.500 3 v27 h30" fill="none" stroke="#9a9a9a"/><path d="M32.500 1 v29" stroke="#7a7a7a" stroke-dasharray="1 1.500"/><rect x="5.500" y="11.500" width="5" height="18" fill="#fff" stroke="#c2c2c2"/><rect x="10.500" y="5.500" width="5" height="24" fill="#c9c9c9" stroke="#9a9a9a"/><rect x="17.500" y="8.500" width="5" height="21" fill="#fff" stroke="#c2c2c2"/><rect x="22.500" y="13.500" width="5" height="16" fill="#c9c9c9" stroke="#9a9a9a"/><path d="M2 28 l12 -14 l6 8 l10 -11" fill="none" stroke="#9a9a9a" stroke-width="1.200"/></svg>
<svg class="a" style="left:528px;top:281px" width="32" height="30" viewBox="0 0 32 30"><path d="M1.500 2 v26 h30" fill="none" stroke="#9a9a9a"/><path d="M2 4 l7 9 l9 -11 l7 7 h5 v19 h-28z" fill="#c9c9c9" stroke="#9a9a9a"/><rect x="6.500" y="17.500" width="5" height="10" fill="#fff" stroke="#9a9a9a"/><rect x="13.500" y="11.500" width="5" height="16" fill="#fff" stroke="#9a9a9a"/><rect x="20.500" y="14.500" width="5" height="13" fill="#fff" stroke="#9a9a9a"/></svg>
<svg class="a" style="left:586px;top:281px" width="38" height="36" viewBox="0 0 38 36"><path d="M1.500 2 v26 h26" fill="none" stroke="#9a9a9a"/><rect x="4.500" y="8.500" width="5" height="19" fill="#fff" stroke="#9a9a9a"/><rect x="10.500" y="3.500" width="5" height="24" fill="#d4d4d4" stroke="#9a9a9a"/><rect x="17.500" y="6.500" width="5" height="21" fill="#fff" stroke="#9a9a9a"/><rect x="22.500" y="10.500" width="4" height="17" fill="#d4d4d4" stroke="#9a9a9a"/><path d="M16 31 l15 -17 l4 3.500 l-15 17z" fill="#3f74b5"/><path d="M32 13 l2 -2 l4 3.500 l-2 2z" fill="#3f74b5"/><path d="M15 32 l4 3.500 l-5.500 1.500z" fill="#3f74b5"/></svg>
<div class="a" style="left:402px;top:330px;width:449px;height:1px;background:#b5b5b5"></div>
<div class="t" id="dlgh" style="left:402px;top:342px;font-size:19px;color:#222;letter-spacing:.9px;font-weight:300">묶은 세로 막대형 - 꺾은선형</div>
<svg class="a" style="left:400px;top:367px" width="390" height="235" viewBox="0 0 390 235" font-family="Liberation Sans, Noto Sans CJK KR, sans-serif"><path d="M.5 234.500 V.5 H389" fill="none" stroke="#d9d9d9"/><path d="M77.3 114.2 H240.3" stroke="#d9d9d9" stroke-width="1"/><path d="M77.3 101.4 H240.3" stroke="#d9d9d9" stroke-width="1"/><path d="M77.3 88.7 H240.3" stroke="#d9d9d9" stroke-width="1"/><path d="M77.3 75.9 H240.3" stroke="#d9d9d9" stroke-width="1"/><path d="M77.3 63.1 H240.3" stroke="#d9d9d9" stroke-width="1"/><path d="M77.3 50.3 H240.3" stroke="#d9d9d9" stroke-width="1"/><path d="M77.3 37.5 H240.3" stroke="#d9d9d9" stroke-width="1"/><path d="M77.3 24.8 H240.3" stroke="#d9d9d9" stroke-width="1"/><path d="M77.3 12.0 H240.3" stroke="#d9d9d9" stroke-width="1"/><text x="66" y="15.2" text-anchor="end" font-size="8.600" fill="#595959" textLength="57" lengthAdjust="spacingAndGlyphs">9,000,000,000</text><text x="66" y="28.0" text-anchor="end" font-size="8.600" fill="#595959" textLength="57" lengthAdjust="spacingAndGlyphs">8,000,000,000</text><text x="66" y="40.7" text-anchor="end" font-size="8.600" fill="#595959" textLength="57" lengthAdjust="spacingAndGlyphs">7,000,000,000</text><text x="66" y="53.5" text-anchor="end" font-size="8.600" fill="#595959" textLength="57" lengthAdjust="spacingAndGlyphs">6,000,000,000</text><text x="66" y="66.3" text-anchor="end" font-size="8.600" fill="#595959" textLength="57" lengthAdjust="spacingAndGlyphs">5,000,000,000</text><text x="66" y="79.1" text-anchor="end" font-size="8.600" fill="#595959" textLength="57" lengthAdjust="spacingAndGlyphs">4,000,000,000</text><text x="66" y="91.9" text-anchor="end" font-size="8.600" fill="#595959" textLength="57" lengthAdjust="spacingAndGlyphs">3,000,000,000</text><text x="66" y="104.6" text-anchor="end" font-size="8.600" fill="#595959" textLength="57" lengthAdjust="spacingAndGlyphs">2,000,000,000</text><text x="66" y="117.4" text-anchor="end" font-size="8.600" fill="#595959" textLength="57" lengthAdjust="spacingAndGlyphs">1,000,000,000</text><text x="66" y="130.0" text-anchor="end" font-size="8.600" fill="#595959">-</text><rect x="79.6" y="123.2" width="2.800" height="3.8" fill="#5b9bd5"/><rect x="87.0" y="24.8" width="2.800" height="102.2" fill="#5b9bd5"/><rect x="94.4" y="123.2" width="2.800" height="3.8" fill="#5b9bd5"/><rect x="101.9" y="114.2" width="2.800" height="12.8" fill="#5b9bd5"/><rect x="109.3" y="116.8" width="2.800" height="10.2" fill="#5b9bd5"/><rect x="116.7" y="120.6" width="2.800" height="6.4" fill="#5b9bd5"/><rect x="124.1" y="101.4" width="2.800" height="25.6" fill="#5b9bd5"/><rect x="131.5" y="110.4" width="2.800" height="16.6" fill="#5b9bd5"/><rect x="138.9" y="75.9" width="2.800" height="51.1" fill="#5b9bd5"/><rect x="146.3" y="124.4" width="2.800" height="2.6" fill="#5b9bd5"/><rect x="153.8" y="95.0" width="2.800" height="31.9" fill="#5b9bd5"/><rect x="161.2" y="50.3" width="2.800" height="76.7" fill="#5b9bd5"/><rect x="168.6" y="107.8" width="2.800" height="19.2" fill="#5b9bd5"/><rect x="176.0" y="120.6" width="2.800" height="6.4" fill="#5b9bd5"/><rect x="183.4" y="121.9" width="2.800" height="5.1" fill="#5b9bd5"/><rect x="190.8" y="116.8" width="2.800" height="10.2" fill="#5b9bd5"/><rect x="198.2" y="69.5" width="2.800" height="57.5" fill="#5b9bd5"/><rect x="205.7" y="123.2" width="2.800" height="3.8" fill="#5b9bd5"/><rect x="213.1" y="101.4" width="2.800" height="25.6" fill="#5b9bd5"/><rect x="220.5" y="95.0" width="2.800" height="31.9" fill="#5b9bd5"/><rect x="227.9" y="107.8" width="2.800" height="19.2" fill="#5b9bd5"/><polyline points="81.0,124.4 88.4,60.9 95.8,123.2 103.3,111.0 110.7,114.9 118.1,120.0 125.5,96.3 132.9,109.1 140.3,86.1 147.7,124.4 155.2,96.3 162.6,29.2 170.0,107.8 177.4,121.2 184.8,123.2 192.2,114.9 199.6,68.7 207.1,123.2 214.5,107.8 221.9,97.7 229.3,110.9 236.7,126.4" fill="none" stroke="#ed7d31" stroke-width="2.200" stroke-linejoin="round" stroke-linecap="round"/><text transform="translate(84.0,133) rotate(-90)" text-anchor="end" font-size="8.800" fill="#595959">Bluetooth Headphones</text><text transform="translate(98.8,133) rotate(-90)" text-anchor="end" font-size="8.800" fill="#595959" textLength="93" lengthAdjust="spacingAndGlyphs">Cameras &amp; Camcorders…</text><text transform="translate(113.7,133) rotate(-90)" text-anchor="end" font-size="8.800" fill="#595959" textLength="93.500" lengthAdjust="spacingAndGlyphs">Cell phones Accessories</text><text transform="translate(128.5,133) rotate(-90)" text-anchor="end" font-size="8.800" fill="#595959">Desktops</text><text transform="translate(143.3,133) rotate(-90)" text-anchor="end" font-size="8.800" fill="#595959">Digital SLR Cameras</text><text transform="translate(158.2,133) rotate(-90)" text-anchor="end" font-size="8.800" fill="#595959">Home Theater System</text><text transform="translate(173.0,133) rotate(-90)" text-anchor="end" font-size="8.800" fill="#595959">Monitors</text><text transform="translate(187.8,133) rotate(-90)" text-anchor="end" font-size="8.800" fill="#595959">MP4&amp;MP3</text><text transform="translate(202.6,133) rotate(-90)" text-anchor="end" font-size="8.800" fill="#595959">Projectors &amp; Screens</text><text transform="translate(217.5,133) rotate(-90)" text-anchor="end" font-size="8.800" fill="#595959">Smart phones &amp; PDAs</text><text transform="translate(232.3,133) rotate(-90)" text-anchor="end" font-size="8.800" fill="#595959">Touch Screen Phones</text><rect x="257" y="106" width="20" height="4" fill="#5b9bd5"/><text x="280" y="111.500" font-size="10.200" fill="#595959">합계: 목표 매출<tspan font-size="8.600">(Budget)</tspan></text><path d="M256 126 h21" stroke="#ed7d31" stroke-width="2.200"/><text x="280" y="129.500" font-size="10.200" fill="#595959">합계: 판매금액</text></svg>
<div class="t" style="left:402px;top:609px;font-size:13.300px;color:#222;letter-spacing:.15px">데이터 계열에 대한 차트 종류와 축을 선택합니다:</div>
<div class="a" style="left:400px;top:627px;width:453px;height:139px;background:#fff;border:1px solid #7a7a7a"></div>
<div class="a" style="left:578px;top:630px;width:1px;height:15px;background:#dcdcdc"></div>
<div class="a" style="left:802px;top:630px;width:1px;height:15px;background:#dcdcdc"></div>
<div class="t" style="left:408px;top:632px;font-size:13.300px;color:#222">계열 이름</div>
<div class="t" style="left:585px;top:632px;font-size:13.300px;color:#222">차트 종류</div>
<div class="t" style="left:809px;top:632px;font-size:13.300px;color:#222">보조 축</div>
<div class="a" style="left:412px;top:660.5px;width:6px;height:12px;background:#5b9bd5"></div>
<div class="t" style="left:428px;top:660px;font-size:13.300px;color:#222">합계: 목표 매출(Budget)</div>
<div class="a" style="left:602px;top:654.0px;width:182px;height:26px;background:#fff;border:1px solid #adadad"></div>
<div class="a" style="left:757px;top:655.0px;width:26px;height:24px;background:#e3e3e3;border-left:1px solid #adadad"></div>
<svg class="a" style="left:765px;top:664.0px" width="10" height="7" viewBox="0 0 10 7"><path d="M1 1.500 l4 4 l4 -4" fill="none" stroke="#444" stroke-width="1.100"/></svg>
<div class="t" style="left:606px;top:660px;font-size:13.300px;color:#222">묶은 세로 막대형</div>
<div class="a" style="left:820px;top:656.5px;width:14px;height:14px;background:#fff;border:1px solid #444"></div>
<div class="a" style="left:412px;top:701.0px;width:6px;height:12px;background:#ed7d31"></div>
<div class="t" style="left:428px;top:700.5px;font-size:13.300px;color:#222">합계: 판매금액</div>
<div class="a" style="left:602px;top:694.5px;width:182px;height:26px;background:#fff;border:1px solid #adadad"></div>
<div class="a" style="left:757px;top:695.5px;width:26px;height:24px;background:#e3e3e3;border-left:1px solid #adadad"></div>
<svg class="a" style="left:765px;top:704.5px" width="10" height="7" viewBox="0 0 10 7"><path d="M1 1.500 l4 4 l4 -4" fill="none" stroke="#444" stroke-width="1.100"/></svg>
<div class="t" style="left:606px;top:700.5px;font-size:13.300px;color:#222">꺾은선형</div>
<div class="a" style="left:820px;top:697px;width:14px;height:14px;background:#fff;border:1px solid #444"></div>
<svg class="a" style="left:726px;top:667px" width="12" height="18" viewBox="0 0 12 18"><path d="M1 1 v13 l3 -3 l2.500 5.500 l2 -1 l-2.500 -5.300 h4.500z" fill="#fff" stroke="#222" stroke-width="1"/></svg>
<div class="a" style="left:711px;top:783px;width:71px;height:25px;background:#e1e1e1;border:2px solid #0078d7"></div>
<div class="t" style="left:711px;top:790px;width:71px;text-align:center;font-size:13.300px;color:#111">확인</div>
<div class="a" style="left:793px;top:783px;width:71px;height:25px;background:#e1e1e1;border:1px solid #adadad"></div>
<div class="t" style="left:793px;top:790px;width:71px;text-align:center;font-size:13.300px;color:#111">취소</div>
<svg class="a" style="left:859px;top:805px" width="11" height="11" viewBox="0 0 11 11"><g fill="#a9a9a9"><rect x="8" y="0" width="2" height="2"/><rect x="8" y="4" width="2" height="2"/><rect x="8" y="8" width="2" height="2"/><rect x="4" y="4" width="2" height="2"/><rect x="4" y="8" width="2" height="2"/><rect x="0" y="8" width="2" height="2"/></g></svg>
</div>
</body>
</html>
